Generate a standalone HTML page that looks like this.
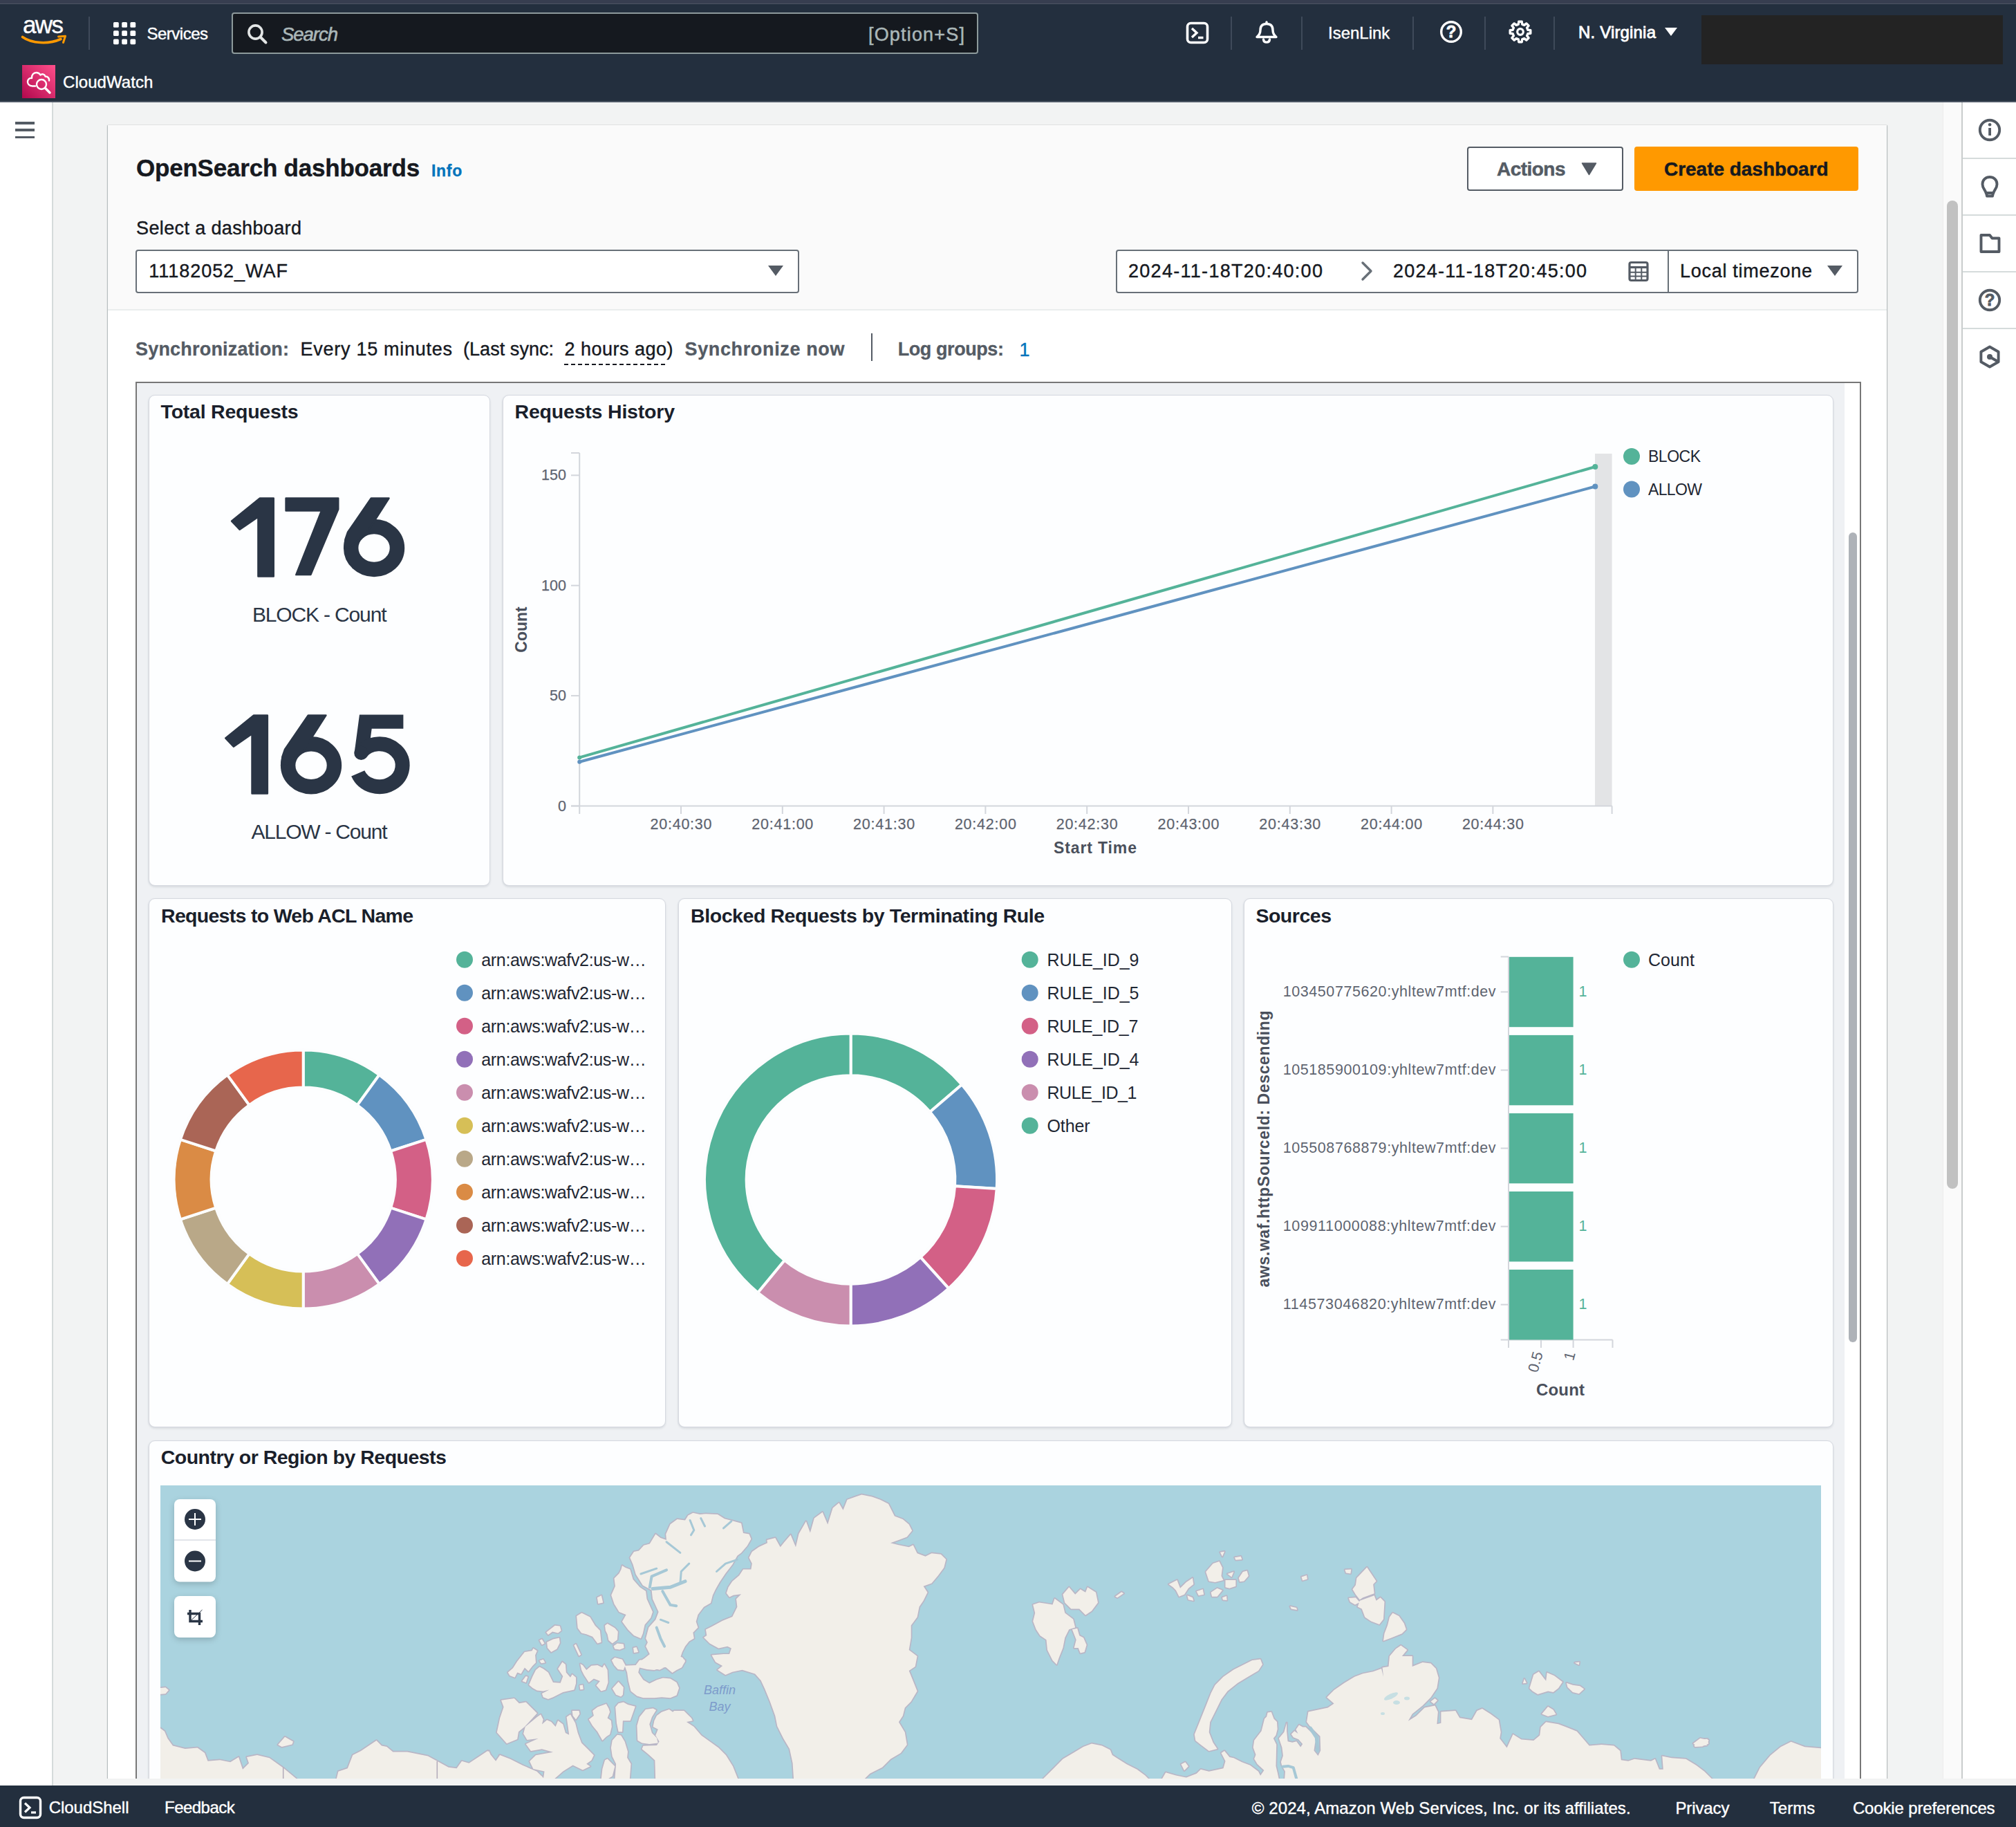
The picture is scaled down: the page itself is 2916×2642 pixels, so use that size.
<!DOCTYPE html>
<html><head><meta charset="utf-8"><title>CloudWatch</title>
<style>
html,body{margin:0;padding:0;}
body{width:2916px;height:2642px;overflow:hidden;background:#f2f3f3;position:relative;font-family:"Liberation Sans",sans-serif;}
#bx div{position:absolute;box-sizing:border-box;}
#gfx{position:absolute;left:0;top:0;}
.t{position:absolute;white-space:pre;line-height:1;}
</style></head><body>
<div id="bx">
<div style="left:0px;top:0px;width:2916px;height:148px;background:#232f3e;border-bottom:2px solid #4b5563;"></div>
<div style="left:0px;top:0px;width:2916px;height:6px;background:#373e50;border-bottom:1px solid #4d5463;"></div>
<div style="left:128px;top:24px;width:2px;height:48px;background:#3f4a5a;"></div>
<div style="left:335px;top:18px;width:1080px;height:60px;background:#15191f;border:2px solid #8d9a9b;border-radius:4px;"></div>
<div style="left:1780px;top:24px;width:2px;height:48px;background:#3f4a5a;"></div>
<div style="left:1882px;top:24px;width:2px;height:48px;background:#3f4a5a;"></div>
<div style="left:2043px;top:24px;width:2px;height:48px;background:#3f4a5a;"></div>
<div style="left:2147px;top:24px;width:2px;height:48px;background:#3f4a5a;"></div>
<div style="left:2247px;top:24px;width:2px;height:48px;background:#3f4a5a;"></div>
<div style="left:2461px;top:22px;width:436px;height:71px;background:#232323;"></div>
<div style="left:0px;top:148px;width:77px;height:2434px;background:#fff;border-right:2px solid #d5dbdb;"></div>
<div style="left:22px;top:176.0px;width:28px;height:3.6px;background:#545b64;"></div>
<div style="left:22px;top:186.39999999999998px;width:28px;height:3.6px;background:#545b64;"></div>
<div style="left:22px;top:196.79999999999998px;width:28px;height:3.6px;background:#545b64;"></div>
<div style="left:2810px;top:148px;width:28px;height:2424px;background:#fafafa;border-left:1px solid #ececec;"></div>
<div style="left:2816px;top:290px;width:16px;height:1429px;background:#c1c1c1;border-radius:8px;"></div>
<div style="left:2837px;top:148px;width:79px;height:2434px;background:#fff;border-left:2px solid #c9cdcd;"></div>
<div style="left:2839px;top:228px;width:77px;height:2px;background:#d5dbdb;"></div>
<div style="left:2839px;top:310px;width:77px;height:2px;background:#d5dbdb;"></div>
<div style="left:2839px;top:392px;width:77px;height:2px;background:#d5dbdb;"></div>
<div style="left:2839px;top:474px;width:77px;height:2px;background:#d5dbdb;"></div>
<div style="left:156px;top:181px;width:2573px;height:2500px;background:#fff;box-shadow:0 1px 2px 0 rgba(0,28,36,.35),1px 0 1px rgba(0,28,36,.15),-1px 0 1px rgba(0,28,36,.15);"></div>
<div style="left:156px;top:181px;width:2573px;height:268px;background:#fafafa;border-bottom:2px solid #eaeded;"></div>
<div style="left:2122px;top:212px;width:226px;height:64px;background:#fff;border:2px solid #545b64;border-radius:4px;"></div>
<div style="left:2364px;top:212px;width:324px;height:64px;background:#ff9900;border-radius:4px;"></div>
<div style="left:196px;top:360.5px;width:959.5px;height:63px;background:#fff;border:2px solid #687078;border-radius:4px;"></div>
<div style="left:1614px;top:360.5px;width:800px;height:63px;background:#fff;border:2px solid #687078;border-radius:4px 0 0 4px;"></div>
<div style="left:2412px;top:360.5px;width:275.5px;height:63px;background:#fff;border:2px solid #687078;border-radius:0 4px 4px 0;"></div>
<div style="left:816px;top:525.5px;width:150px;height:2px;background:repeating-linear-gradient(90deg,#16191f 0 6px,transparent 6px 10px);"></div>
<div style="left:1260px;top:482px;width:2px;height:40px;background:#545b64;"></div>
<div style="left:196px;top:552px;width:2496px;height:2100px;background:#eff1f4;border:2px solid #777;"></div>
<div style="left:2668px;top:554px;width:22px;height:2100px;background:#fff;"></div>
<div style="left:2674px;top:770px;width:12px;height:1171px;background:#aeb2b8;border-radius:6px;"></div>
<div style="left:214.5px;top:570.5px;width:494.5px;height:710.5px;background:#fdfeff;border:1.5px solid #d6d9e0;border-radius:9px;box-shadow:0 2px 3px rgba(60,70,90,.12),-1px 0 2px rgba(60,70,90,.05);"></div>
<div style="left:727px;top:570.5px;width:1924.5px;height:710.5px;background:#fdfeff;border:1.5px solid #d6d9e0;border-radius:9px;box-shadow:0 2px 3px rgba(60,70,90,.12),-1px 0 2px rgba(60,70,90,.05);"></div>
<div style="left:214.5px;top:1299px;width:748.5px;height:765px;background:#fdfeff;border:1.5px solid #d6d9e0;border-radius:9px;box-shadow:0 2px 3px rgba(60,70,90,.12),-1px 0 2px rgba(60,70,90,.05);"></div>
<div style="left:981px;top:1299px;width:800.5px;height:765px;background:#fdfeff;border:1.5px solid #d6d9e0;border-radius:9px;box-shadow:0 2px 3px rgba(60,70,90,.12),-1px 0 2px rgba(60,70,90,.05);"></div>
<div style="left:1798.5px;top:1299px;width:853.0px;height:765px;background:#fdfeff;border:1.5px solid #d6d9e0;border-radius:9px;box-shadow:0 2px 3px rgba(60,70,90,.12),-1px 0 2px rgba(60,70,90,.05);"></div>
<div style="left:214.5px;top:2083px;width:2437.0px;height:617px;background:#fdfeff;border:1.5px solid #d6d9e0;border-radius:9px;box-shadow:0 2px 3px rgba(60,70,90,.12),-1px 0 2px rgba(60,70,90,.05);"></div>
<div style="left:77px;top:2572px;width:2839px;height:10px;background:#f2f3f3;"></div>
<div style="left:0px;top:2582px;width:2916px;height:60px;background:#232f3e;"></div>
</div>
<svg id="gfx" width="2916" height="2642" viewBox="0 0 2916 2642">
<path d="M32.5 53.5 C46 63 70 64.5 88 56.5" fill="none" stroke="#ff9900" stroke-width="3.6" stroke-linecap="round"/><path d="M84.5 53 L94.5 52.2 L91.5 61.5" fill="none" stroke="#ff9900" stroke-width="3" stroke-linejoin="round" stroke-linecap="round"/>
<rect x="164.0" y="32.0" width="7.8" height="7.8" rx="1.6" fill="#fff"/>
<rect x="176.2" y="32.0" width="7.8" height="7.8" rx="1.6" fill="#fff"/>
<rect x="188.4" y="32.0" width="7.8" height="7.8" rx="1.6" fill="#fff"/>
<rect x="164.0" y="44.2" width="7.8" height="7.8" rx="1.6" fill="#fff"/>
<rect x="176.2" y="44.2" width="7.8" height="7.8" rx="1.6" fill="#fff"/>
<rect x="188.4" y="44.2" width="7.8" height="7.8" rx="1.6" fill="#fff"/>
<rect x="164.0" y="56.4" width="7.8" height="7.8" rx="1.6" fill="#fff"/>
<rect x="176.2" y="56.4" width="7.8" height="7.8" rx="1.6" fill="#fff"/>
<rect x="188.4" y="56.4" width="7.8" height="7.8" rx="1.6" fill="#fff"/>
<circle cx="369.5" cy="46.5" r="9.6" fill="none" stroke="#e3e6e6" stroke-width="3.6"/><path d="M376.5 53.5 L384.5 61.5" stroke="#e3e6e6" stroke-width="4" stroke-linecap="round"/>
<defs><linearGradient id="cwg" x1="0" y1="1" x2="1" y2="0"><stop offset="0" stop-color="#b0084d"/><stop offset="1" stop-color="#ff4f8b"/></linearGradient></defs><rect x="32" y="94" width="48" height="48" fill="url(#cwg)"/>
<g fill="none" stroke="#fff" stroke-width="2.4" stroke-linecap="round" stroke-linejoin="round"><path d="M51 124.5 H47 C42 124.5 39.5 121 40 117.5 C40.5 114 43.5 112.5 46 113 C45.5 108.5 48.5 105 52.5 105 C55 105 57 106 58.5 108.5 C60.5 106.5 64.5 107 65.5 110.5 C69.5 110.5 71.5 113.5 71 116.5"/><circle cx="60" cy="122" r="7"/><path d="M65.3 127.3 L72 134" stroke-width="3.4"/></g>
<rect x="1717.5" y="33.5" width="29" height="28" rx="5" fill="none" stroke="#fff" stroke-width="3.6"/><path d="M1724 41 L1731 47.5 L1724 54" fill="none" stroke="#fff" stroke-width="3.4" stroke-linejoin="miter"/><path d="M1733 54.5 H1740.5" stroke="#fff" stroke-width="3.4"/>
<g fill="none" stroke="#fff" stroke-width="3.4" stroke-linejoin="round" stroke-linecap="round"><path d="M1818 53.5 C1823 49.5 1823 46 1823 43.5 C1823 37 1827 34.5 1832 34.5 C1837 34.5 1841 37 1841 43.5 C1841 46 1841 49.5 1846 53.5 Z"/><path d="M1827.5 57 C1828 62.5 1836 62.5 1836.5 57"/><path d="M1832 32 V34"/></g>
<circle cx="2099" cy="46" r="14.3" fill="none" stroke="#fff" stroke-width="3.4"/>
<path d="M2196.8 31.2 L2201.2 31.2 L2201.7 35.1 L2204.8 36.4 L2207.9 33.9 L2211.1 37.1 L2208.6 40.2 L2209.9 43.3 L2213.8 43.8 L2213.8 48.2 L2209.9 48.7 L2208.6 51.8 L2211.1 54.9 L2207.9 58.1 L2204.8 55.6 L2201.7 56.9 L2201.2 60.8 L2196.8 60.8 L2196.3 56.9 L2193.2 55.6 L2190.1 58.1 L2186.9 54.9 L2189.4 51.8 L2188.1 48.7 L2184.2 48.2 L2184.2 43.8 L2188.1 43.3 L2189.4 40.2 L2186.9 37.1 L2190.1 33.9 L2193.2 36.4 L2196.3 35.1Z" fill="none" stroke="#fff" stroke-width="3.4" stroke-linejoin="round"/><circle cx="2199" cy="46" r="4.3" fill="none" stroke="#fff" stroke-width="3.2"/>
<path d="M2408 40 H2426 L2417 52 Z" fill="#fff"/>
<circle cx="2878" cy="188" r="14.2" fill="none" stroke="#545b64" stroke-width="3.9"/><rect x="2876.2" y="185" width="3.8" height="11" fill="#545b64"/><circle cx="2878.1" cy="180.3" r="2.3" fill="#545b64"/>
<g fill="none" stroke="#545b64" stroke-width="3.9" stroke-linejoin="round"><path d="M2872.5 279 C2872 275 2867.5 272.5 2867.5 266.5 C2867.5 260 2872 256 2878 256 C2884 256 2888.5 260 2888.5 266.5 C2888.5 272.5 2884 275 2883.5 279 Z"/><path d="M2873 279 L2874 283.5 H2882 L2883 279"/></g>
<path d="M2865.5 340 H2878 L2881.5 344.5 H2891.5 V364 H2865.5 Z" fill="none" stroke="#545b64" stroke-width="3.9" stroke-linejoin="round"/>
<circle cx="2878" cy="434" r="14.2" fill="none" stroke="#545b64" stroke-width="3.9"/>
<path d="M2878.0 501.5 L2890.6 508.8 L2890.6 523.2 L2878.0 530.5 L2865.4 523.2 L2865.4 508.8Z" fill="none" stroke="#545b64" stroke-width="3.9" stroke-linejoin="round"/><circle cx="2878" cy="516" r="4" fill="#545b64"/><path d="M2878 516 L2890 523" stroke="#545b64" stroke-width="3.9"/>
<path d="M2288.5 236 H2308.5 L2298.5 252.5 Z" fill="#545b64" stroke="#545b64" stroke-width="1.5" stroke-linejoin="round"/>
<path d="M1111 384 H1133 L1122 399 Z" fill="#545b64"/>
<path d="M1971 380 L1983 392 L1971 404" fill="none" stroke="#687078" stroke-width="3.4" stroke-linecap="round" stroke-linejoin="round"/>
<rect x="2357" y="379.5" width="26" height="26" rx="2.5" fill="none" stroke="#545b64" stroke-width="3.2"/><path d="M2357 386.5 H2383" stroke="#545b64" stroke-width="3.2"/><path d="M2365.7 388 V404 M2374.3 388 V404 M2358 393.8 H2382 M2358 399.6 H2382" stroke="#545b64" stroke-width="2"/>
<path d="M2643 384 H2665 L2654 399 Z" fill="#545b64"/>
<g transform="translate(210,680) scale(0.30656)"><path d="M606 132 V501 H533 V220 L446 280 L408 240 L541 132Z" fill="#2a3545" stroke="#2a3545" stroke-width="8" stroke-linejoin="round"/><path d="M664 132 H911 V184 L781 493 H712 L832 191 H664Z" fill="#2a3545" stroke="#2a3545" stroke-width="8" stroke-linejoin="round"/><ellipse cx="1080" cy="367" rx="109" ry="101" fill="none" stroke="#2a3545" stroke-width="70"/><path d="M1066 132 H1150 L1040 304 L960 367 L940 367 L944 327 L956 292Z" fill="#2a3545" stroke="#2a3545" stroke-width="8" stroke-linejoin="round"/><path d="M577 1156 V1525 H504 V1244 L417 1304 L379 1264 L512 1156Z" fill="#2a3545" stroke="#2a3545" stroke-width="8" stroke-linejoin="round"/><ellipse cx="783" cy="1392" rx="109" ry="101" fill="none" stroke="#2a3545" stroke-width="70"/><path d="M769 1156 H853 L743 1328 L663 1392 L643 1392 L647 1352 L659 1317Z" fill="#2a3545" stroke="#2a3545" stroke-width="8" stroke-linejoin="round"/><path d="M1218 1186 H1040 L1020 1336" fill="none" stroke="#2a3545" stroke-width="66" stroke-linejoin="miter"/><path d="M1016.8 1332.6 A109 101 0 1 1 1003.9 1429.8" fill="none" stroke="#2a3545" stroke-width="68"/><circle cx="1019" cy="1334" r="33" fill="#2a3545"/></g>
<rect x="2307" y="656" width="24.6" height="510" fill="#e3e4e6"/>
<path d="M838.2 655 V1177 M826 655 H838.2 M826 1165.5 H2331.6 M2331.6 1165.5 V1177" fill="none" stroke="#d3d6dc" stroke-width="2"/>
<path d="M826 1165.5 H838.2" stroke="#d3d6dc" stroke-width="2"/>
<path d="M826 1006.1 H838.2" stroke="#d3d6dc" stroke-width="2"/>
<path d="M826 846.7 H838.2" stroke="#d3d6dc" stroke-width="2"/>
<path d="M826 687.3 H838.2" stroke="#d3d6dc" stroke-width="2"/>
<path d="M985.0 1165.5 V1177" stroke="#d3d6dc" stroke-width="2"/>
<path d="M1131.8 1165.5 V1177" stroke="#d3d6dc" stroke-width="2"/>
<path d="M1278.6 1165.5 V1177" stroke="#d3d6dc" stroke-width="2"/>
<path d="M1425.4 1165.5 V1177" stroke="#d3d6dc" stroke-width="2"/>
<path d="M1572.2 1165.5 V1177" stroke="#d3d6dc" stroke-width="2"/>
<path d="M1719.0 1165.5 V1177" stroke="#d3d6dc" stroke-width="2"/>
<path d="M1865.8 1165.5 V1177" stroke="#d3d6dc" stroke-width="2"/>
<path d="M2012.6 1165.5 V1177" stroke="#d3d6dc" stroke-width="2"/>
<path d="M2159.4 1165.5 V1177" stroke="#d3d6dc" stroke-width="2"/>
<path d="M838.2 1095.4 L2307.3 675" stroke="#54b399" stroke-width="4" fill="none"/><circle cx="2307.3" cy="675" r="4" fill="#54b399"/><circle cx="838.2" cy="1095.4" r="3" fill="#54b399"/>
<path d="M838.2 1101.7 L2307.3 703.5" stroke="#6092c0" stroke-width="4" fill="none"/><circle cx="2307.3" cy="703.5" r="4" fill="#6092c0"/><circle cx="838.2" cy="1101.7" r="3" fill="#6092c0"/>
<circle cx="2360" cy="660" r="12" fill="#54b399"/><circle cx="2360" cy="707.5" r="12" fill="#6092c0"/>
<path d="M438.7 1518.6 A187 187 0 0 1 548.6 1554.3 L516.9 1598.0 A133 133 0 0 0 438.7 1572.6Z" fill="#54b399" stroke="#fcfdfe" stroke-width="4"/><path d="M548.6 1554.3 A187 187 0 0 1 616.5 1647.8 L565.2 1664.5 A133 133 0 0 0 516.9 1598.0Z" fill="#6092c0" stroke="#fcfdfe" stroke-width="4"/><path d="M616.5 1647.8 A187 187 0 0 1 616.5 1763.4 L565.2 1746.7 A133 133 0 0 0 565.2 1664.5Z" fill="#d36086" stroke="#fcfdfe" stroke-width="4"/><path d="M616.5 1763.4 A187 187 0 0 1 548.6 1856.9 L516.9 1813.2 A133 133 0 0 0 565.2 1746.7Z" fill="#9170b8" stroke="#fcfdfe" stroke-width="4"/><path d="M548.6 1856.9 A187 187 0 0 1 438.7 1892.6 L438.7 1838.6 A133 133 0 0 0 516.9 1813.2Z" fill="#ca8eae" stroke="#fcfdfe" stroke-width="4"/><path d="M438.7 1892.6 A187 187 0 0 1 328.8 1856.9 L360.5 1813.2 A133 133 0 0 0 438.7 1838.6Z" fill="#d6bf57" stroke="#fcfdfe" stroke-width="4"/><path d="M328.8 1856.9 A187 187 0 0 1 260.9 1763.4 L312.2 1746.7 A133 133 0 0 0 360.5 1813.2Z" fill="#b9a888" stroke="#fcfdfe" stroke-width="4"/><path d="M260.9 1763.4 A187 187 0 0 1 260.9 1647.8 L312.2 1664.5 A133 133 0 0 0 312.2 1746.7Z" fill="#da8b45" stroke="#fcfdfe" stroke-width="4"/><path d="M260.9 1647.8 A187 187 0 0 1 328.8 1554.3 L360.5 1598.0 A133 133 0 0 0 312.2 1664.5Z" fill="#aa6556" stroke="#fcfdfe" stroke-width="4"/><path d="M328.8 1554.3 A187 187 0 0 1 438.7 1518.6 L438.7 1572.6 A133 133 0 0 0 360.5 1598.0Z" fill="#e7664c" stroke="#fcfdfe" stroke-width="4"/>
<circle cx="672" cy="1387.7" r="12" fill="#54b399"/>
<circle cx="672" cy="1435.7" r="12" fill="#6092c0"/>
<circle cx="672" cy="1483.7" r="12" fill="#d36086"/>
<circle cx="672" cy="1531.7" r="12" fill="#9170b8"/>
<circle cx="672" cy="1579.7" r="12" fill="#ca8eae"/>
<circle cx="672" cy="1627.7" r="12" fill="#d6bf57"/>
<circle cx="672" cy="1675.7" r="12" fill="#b9a888"/>
<circle cx="672" cy="1723.7" r="12" fill="#da8b45"/>
<circle cx="672" cy="1771.7" r="12" fill="#aa6556"/>
<circle cx="672" cy="1819.7" r="12" fill="#e7664c"/>
<path d="M1230.6 1494.5 A211.5 211.5 0 0 1 1391.2 1568.4 L1345.1 1607.9 A150.8 150.8 0 0 0 1230.6 1555.2Z" fill="#54b399" stroke="#fcfdfe" stroke-width="4"/><path d="M1391.2 1568.4 A211.5 211.5 0 0 1 1441.7 1718.9 L1381.1 1715.2 A150.8 150.8 0 0 0 1345.1 1607.9Z" fill="#6092c0" stroke="#fcfdfe" stroke-width="4"/><path d="M1441.7 1718.9 A211.5 211.5 0 0 1 1372.1 1863.2 L1331.5 1818.1 A150.8 150.8 0 0 0 1381.1 1715.2Z" fill="#d36086" stroke="#fcfdfe" stroke-width="4"/><path d="M1372.1 1863.2 A211.5 211.5 0 0 1 1230.6 1917.5 L1230.6 1856.8 A150.8 150.8 0 0 0 1331.5 1818.1Z" fill="#9170b8" stroke="#fcfdfe" stroke-width="4"/><path d="M1230.6 1917.5 A211.5 211.5 0 0 1 1096.1 1869.2 L1134.7 1822.4 A150.8 150.8 0 0 0 1230.6 1856.8Z" fill="#ca8eae" stroke="#fcfdfe" stroke-width="4"/><path d="M1096.1 1869.2 A211.5 211.5 0 0 1 1230.6 1494.5 L1230.6 1555.2 A150.8 150.8 0 0 0 1134.7 1822.4Z" fill="#54b399" stroke="#fcfdfe" stroke-width="4"/>
<circle cx="1489.7" cy="1387.7" r="12" fill="#54b399"/>
<circle cx="1489.7" cy="1435.7" r="12" fill="#6092c0"/>
<circle cx="1489.7" cy="1483.7" r="12" fill="#d36086"/>
<circle cx="1489.7" cy="1531.7" r="12" fill="#9170b8"/>
<circle cx="1489.7" cy="1579.7" r="12" fill="#ca8eae"/>
<circle cx="1489.7" cy="1627.7" r="12" fill="#54b399"/>
<path d="M2182 1383.5 V1949 M2170.7 1383.5 H2182 M2170.7 1937.5 H2332.5 M2229 1937.5 V1949 M2275.6 1937.5 V1949 M2332.5 1937.5 V1949" fill="none" stroke="#d3d6dc" stroke-width="2"/>
<rect x="2183" y="1383.8" width="92.6" height="101.4" fill="#54b399"/><path d="M2170.7 1434.4 H2182" stroke="#d3d6dc" stroke-width="2"/>
<rect x="2183" y="1496.9" width="92.6" height="101.4" fill="#54b399"/><path d="M2170.7 1547.5 H2182" stroke="#d3d6dc" stroke-width="2"/>
<rect x="2183" y="1609.9" width="92.6" height="101.4" fill="#54b399"/><path d="M2170.7 1660.5 H2182" stroke="#d3d6dc" stroke-width="2"/>
<rect x="2183" y="1723.0" width="92.6" height="101.4" fill="#54b399"/><path d="M2170.7 1773.6 H2182" stroke="#d3d6dc" stroke-width="2"/>
<rect x="2183" y="1836.0" width="92.6" height="101.4" fill="#54b399"/><path d="M2170.7 1886.6 H2182" stroke="#d3d6dc" stroke-width="2"/>
<circle cx="2360" cy="1387.7" r="12" fill="#54b399"/>
<defs><filter id="mapblur" x="-2%" y="-5%" width="104%" height="110%"><feGaussianBlur stdDeviation="0.7"/></filter><clipPath id="mapclip"><rect x="232" y="2148" width="2402" height="424"/></clipPath></defs><rect x="232" y="2148" width="2402" height="424" fill="#aad3df"/><g clip-path="url(#mapclip)"><g filter="url(#mapblur)"><path d="M232.0 2499.2 L238.0 2503.7 L242.4 2514.1 L249.9 2524.5 L267.7 2529.0 L285.6 2527.5 L296.0 2534.9 L300.5 2546.8 L318.3 2545.3 L333.2 2548.3 L345.1 2540.9 L351.0 2558.7 L360.0 2549.8 L357.0 2540.9 L371.9 2537.9 L389.7 2542.3 L410.6 2557.2 L428.4 2572.1 L230.5 2573.6Z M230.5 2441.2 L239.4 2440.3 L243.9 2444.1 L239.4 2449.2 L230.5 2450.1Z M402.2 2523.0 L412.1 2511.7 L424.0 2518.5 L422.5 2522.4 L407.6 2526.0Z M486.5 2573.6 L489.4 2561.7 L502.8 2557.2 L510.3 2537.9 L522.2 2531.9 L544.5 2517.0 L551.9 2524.5 L559.4 2526.0 L568.3 2533.4 L589.1 2533.4 L618.9 2539.4 L632.3 2546.8 L648.7 2555.7 L660.6 2557.2 L668.0 2546.8 L678.4 2549.8 L696.3 2537.9 L705.2 2531.9 L717.1 2546.8 L723.1 2537.9 L738.0 2543.8 L755.8 2552.8 L776.6 2561.7 L788.5 2573.6Z M1109.4 2226.9 L1121.3 2223.9 L1128.7 2237.3 L1134.7 2229.8 L1143.6 2219.4 L1151.0 2237.3 L1155.5 2217.9 L1165.9 2200.1 L1171.9 2216.5 L1177.8 2195.6 L1189.7 2186.7 L1197.2 2204.5 L1204.6 2180.7 L1213.5 2173.3 L1219.5 2183.7 L1225.5 2168.8 L1237.4 2164.4 L1246.3 2161.4 L1261.2 2164.4 L1273.1 2168.8 L1285.0 2174.8 L1288.0 2180.7 L1293.9 2192.6 L1305.8 2197.1 L1314.7 2204.5 L1319.2 2213.5 L1311.8 2222.4 L1299.9 2226.9 L1288.0 2231.3 L1299.9 2234.3 L1314.7 2237.3 L1320.7 2234.3 L1326.6 2246.2 L1338.5 2250.7 L1347.5 2246.2 L1360.9 2247.7 L1368.3 2255.1 L1365.3 2267.0 L1356.4 2279.0 L1347.5 2289.4 L1335.6 2293.8 L1341.5 2302.8 L1335.6 2314.7 L1329.6 2323.6 L1326.6 2338.5 L1317.7 2350.4 L1317.7 2368.2 L1314.7 2386.1 L1326.6 2395.0 L1323.7 2409.9 L1314.7 2415.9 L1320.7 2430.7 L1326.6 2445.6 L1317.7 2460.5 L1308.8 2469.4 L1305.8 2481.3 L1299.9 2490.3 L1308.8 2505.1 L1311.8 2523.0 L1302.8 2534.9 L1288.0 2543.8 L1276.0 2555.7 L1258.2 2564.7 L1249.3 2573.6 L1148.1 2573.6 L1146.6 2549.8 L1142.1 2529.0 L1133.2 2514.1 L1124.3 2496.2 L1121.3 2481.3 L1113.8 2460.5 L1106.4 2442.6 L1100.6 2430.1 L1092.1 2420.5 L1073.6 2414.8 L1059.3 2417.7 L1049.4 2422.0 L1038.0 2414.8 L1045.1 2409.1 L1035.1 2403.5 L1029.4 2393.5 L1046.5 2392.1 L1055.1 2392.1 L1057.9 2383.5 L1052.2 2380.7 L1039.4 2383.5 L1026.6 2376.4 L1018.0 2367.9 L1022.3 2365.0 L1020.9 2356.5 L1029.4 2352.2 L1045.1 2343.7 L1059.3 2338.0 L1066.4 2323.7 L1065.0 2312.3 L1072.1 2305.2 L1060.7 2306.7 L1055.1 2309.5 L1050.8 2303.8 L1053.6 2295.3 L1059.3 2286.7 L1069.3 2278.2 L1075.0 2269.6 L1086.4 2269.6 L1087.8 2261.1 L1083.5 2252.6 L1087.8 2244.0 L1097.8 2236.9 L1110.0 2231.2Z M911.3 2252.6 L917.0 2244.0 L924.1 2242.6 L931.2 2234.8 L939.8 2232.6 L948.3 2218.4 L955.4 2224.1 L964.0 2226.9 L963.2 2218.4 L969.6 2204.2 L979.6 2197.0 L991.0 2198.5 L995.3 2191.4 L1002.4 2187.8 L1012.3 2189.9 L1020.9 2189.2 L1038.0 2189.9 L1047.9 2196.3 L1059.3 2199.2 L1072.1 2202.7 L1075.0 2217.0 L1083.5 2218.4 L1086.4 2225.5 L1080.7 2235.5 L1072.1 2245.4 L1066.4 2249.7 L1059.3 2262.5 L1049.4 2275.3 L1040.8 2288.1 L1035.1 2298.1 L1030.9 2306.7 L1028.0 2318.0 L1018.0 2323.7 L1009.5 2335.1 L1006.7 2345.1 L1009.5 2353.6 L1002.4 2360.7 L1003.8 2369.3 L996.7 2373.6 L991.0 2380.7 L986.7 2389.2 L983.9 2397.8 L991.0 2400.6 L986.7 2410.6 L978.2 2414.8 L972.5 2419.1 L962.5 2410.6 L954.0 2414.8 L944.0 2412.0 L935.5 2413.4 L926.9 2409.1 L924.1 2403.5 L932.6 2397.8 L939.8 2392.1 L934.1 2380.7 L936.9 2375.0 L934.1 2369.3 L938.3 2353.6 L948.3 2342.2 L952.6 2330.9 L944.0 2312.3 L942.6 2299.5 L929.8 2292.4 L919.8 2276.8 L915.6 2262.5Z M899.9 2264.0 L904.2 2266.8 L911.3 2269.6 L915.6 2283.9 L925.5 2295.3 L934.1 2301.0 L935.5 2312.3 L944.0 2330.9 L941.2 2339.4 L932.6 2349.4 L929.8 2362.2 L926.9 2369.3 L917.0 2365.0 L908.4 2356.5 L899.9 2345.1 L905.6 2335.1 L895.6 2330.9 L888.5 2319.5 L884.2 2306.7 L889.9 2293.8 L888.5 2282.5 L895.6 2275.3 L898.5 2269.6Z M863.8 2310.2 L869.8 2307.2 L872.2 2317.6 L865.3 2319.1Z M734.8 2418.6 L742.0 2412.3 L748.2 2402.5 L758.9 2389.1 L769.6 2387.3 L771.4 2383.8 L776.8 2387.3 L774.1 2393.6 L775.0 2404.3 L770.5 2408.8 L764.3 2416.8 L758.9 2411.4 L753.6 2420.4 L748.2 2418.6 L744.6 2425.7 L737.5 2423.0Z M765.2 2436.4 L770.5 2423.9 L775.0 2415.0 L780.4 2410.5 L785.7 2413.2 L792.9 2418.6 L800.0 2432.9 L810.7 2433.8 L814.3 2423.9 L807.1 2413.2 L813.4 2403.4 L817.9 2407.0 L818.8 2418.6 L825.0 2425.7 L827.7 2421.2 L833.0 2425.7 L833.0 2434.6 L830.4 2443.6 L814.3 2447.1 L800.0 2454.3 L792.9 2457.0 L785.7 2454.3 L783.9 2448.9 L794.6 2443.6 L785.7 2445.4 L776.8 2444.5 L770.5 2440.9Z M755.4 2431.1 L760.7 2423.9 L763.4 2424.8 L760.7 2432.9Z M780.4 2401.6 L785.7 2399.8 L788.4 2404.3 L783.0 2405.2Z M838.4 2437.3 L842.9 2436.4 L843.8 2442.7 L839.3 2443.2Z M790.2 2360.5 L802.7 2350.7 L809.8 2351.6 L811.6 2357.9 L807.1 2361.4 L799.1 2359.6 L792.9 2364.1Z M791.1 2374.8 L800.0 2370.4 L808.9 2368.6 L809.8 2375.7 L805.4 2384.6 L797.3 2389.1 L792.0 2382.9Z M780.4 2372.1 L783.9 2370.4 L787.5 2376.6 L783.9 2378.4Z M830.4 2379.3 L833.0 2377.5 L840.2 2392.7 L837.5 2394.5Z M834.1 2337.0 L841.4 2332.5 L853.4 2338.6 L860.7 2350.7 L867.9 2357.9 L869.6 2374.8 L864.3 2376.6 L857.1 2366.8 L848.2 2363.2 L841.1 2361.4 L835.7 2354.3Z M875.0 2350.7 L878.6 2348.0 L889.3 2354.3 L893.8 2359.6 L892.9 2371.2 L885.7 2376.6 L880.4 2372.1 L878.6 2363.2 L875.9 2357.9Z M887.5 2380.2 L892.9 2376.6 L901.8 2377.5 L902.7 2382.9 L896.4 2385.5 L889.3 2384.6Z M916.1 2382.9 L920.5 2382.0 L923.2 2389.1 L917.0 2390.0Z M839.3 2406.1 L842.9 2407.9 L848.2 2415.0 L855.4 2408.8 L864.3 2407.9 L871.4 2411.4 L874.1 2407.0 L878.6 2415.0 L879.5 2432.9 L875.9 2443.6 L869.6 2445.4 L862.5 2437.3 L867.9 2431.1 L858.9 2427.5 L851.8 2432.9 L844.6 2422.1 L841.1 2415.0Z M884.8 2400.7 L889.3 2397.1 L900.0 2399.8 L904.5 2407.9 L901.8 2415.0 L893.8 2414.1 L888.4 2407.9Z M885.7 2441.8 L894.6 2432.0 L901.8 2440.0 L900.9 2450.7 L898.2 2453.4 L891.1 2450.7Z M903.6 2408.8 L919.6 2407.9 L925.0 2400.7 L937.5 2398.9 L944.6 2391.8 L950.0 2395.4 L962.5 2398.9 L978.6 2393.6 L987.5 2397.1 L991.1 2402.5 L985.7 2411.4 L978.6 2415.0 L973.2 2418.6 L967.9 2410.5 L957.1 2411.4 L946.4 2415.0 L935.7 2414.1 L925.0 2411.4 L923.2 2418.6 L930.4 2429.3 L939.3 2434.6 L950.0 2429.3 L958.9 2426.6 L969.6 2427.5 L978.6 2432.9 L982.1 2440.9 L978.6 2451.6 L969.6 2455.2 L957.1 2454.3 L946.4 2455.2 L930.4 2455.2 L921.4 2452.5 L912.5 2445.4 L908.9 2431.1 L907.1 2418.6Z M725.0 2458.8 L743.8 2456.1 L750.9 2463.2 L760.7 2461.4 L776.8 2477.5 L758.9 2497.1 L750.0 2504.3 L748.2 2515.0 L733.0 2521.2 L718.8 2505.2 L723.2 2484.6 L728.6 2468.6Z M757.1 2507.0 L759.8 2497.1 L776.8 2482.9 L782.1 2479.3 L785.7 2486.4 L783.9 2493.6 L791.1 2487.3 L797.3 2490.0 L803.6 2497.1 L807.1 2488.2 L814.3 2493.6 L817.9 2506.1 L823.2 2508.8 L819.6 2482.9 L825.0 2479.3 L832.1 2491.8 L835.7 2506.1 L841.1 2520.4 L850.0 2529.3 L858.9 2538.2 L855.4 2545.4 L848.2 2550.7 L853.6 2554.3 L842.9 2559.6 L828.6 2552.5 L814.3 2561.4 L800.0 2573.9 L785.7 2573.9 L787.5 2561.4 L771.4 2557.9 L766.1 2547.1 L775.0 2538.2 L800.0 2533.8 L783.9 2529.3 L767.9 2532.0 L760.7 2522.1 L778.6 2514.1 L762.5 2515.9Z M698.2 2541.8 L707.1 2532.0 L714.3 2548.0 L723.2 2545.4 L722.3 2538.2 L726.8 2550.7 L753.6 2552.5 L771.4 2559.6 L783.9 2568.6 L778.6 2573.9 L698.2 2573.9Z M851.8 2486.4 L858.9 2481.1 L857.1 2473.9 L864.3 2468.6 L876.8 2464.1 L880.4 2470.4 L882.1 2475.7 L878.6 2484.6 L883.9 2488.2 L884.8 2497.1 L882.1 2507.9 L876.8 2511.4 L871.4 2516.8 L864.3 2504.3 L857.1 2495.4Z M827.7 2473.9 L837.5 2473.9 L838.4 2478.4 L833.0 2486.4 L828.6 2481.1Z M890.2 2468.6 L894.6 2463.2 L901.8 2461.4 L908.0 2465.0 L918.8 2467.7 L911.6 2488.2 L900.9 2488.2 L900.0 2504.3 L894.6 2504.3 L892.0 2491.8Z M885.7 2516.8 L892.9 2508.8 L898.2 2509.6 L903.6 2518.6 L908.0 2532.9 L907.1 2541.8 L912.5 2550.7 L910.7 2573.9 L889.3 2573.9 L891.1 2550.7 L885.7 2540.0 L883.9 2527.5Z M875.0 2545.4 L878.6 2543.6 L889.3 2554.3 L885.7 2568.6 L876.8 2573.9 L869.6 2573.9 L871.4 2557.9Z M922.3 2516.8 L921.4 2495.4 L925.0 2482.9 L933.9 2472.1 L944.6 2470.4 L949.1 2473.0 L942.9 2482.9 L939.3 2493.6 L942.9 2506.1 L950.0 2513.2 L951.8 2520.4 L939.3 2522.1 L928.6 2520.4Z M950.0 2481.1 L957.1 2475.7 L967.9 2472.1 L973.2 2475.7 L975.0 2473.9 L989.3 2473.9 L1000.0 2484.6 L1001.8 2488.2 L992.9 2490.0 L1003.6 2497.1 L1014.3 2509.6 L1026.8 2518.6 L1039.3 2527.5 L1050.0 2538.2 L1060.0 2554.3 L1067.9 2573.9 L948.2 2573.9 L947.3 2545.4 L937.5 2536.4 L928.6 2529.3 L930.4 2524.8 L950.0 2523.9 L953.6 2518.6 L948.2 2509.6 L951.8 2500.7 L944.6 2497.1 L946.4 2488.2Z M1494.2 2320.6 L1503.1 2317.6 L1513.5 2319.1 L1522.5 2320.6 L1525.5 2311.7 L1537.4 2320.6 L1540.3 2332.5 L1552.2 2341.5 L1555.2 2353.4 L1546.3 2356.3 L1540.3 2368.2 L1537.4 2383.1 L1531.4 2398.0 L1528.4 2406.9 L1522.5 2401.0 L1515.0 2386.1 L1513.5 2371.2 L1504.6 2365.3 L1498.7 2356.3 L1494.2 2344.4 L1497.2 2332.5Z M1537.4 2305.7 L1546.3 2295.3 L1555.2 2305.7 L1562.7 2298.3 L1570.1 2302.8 L1573.1 2295.3 L1585.0 2302.8 L1588.0 2317.6 L1579.0 2329.5 L1570.1 2335.5 L1561.2 2326.6 L1549.3 2326.6 L1540.3 2317.6Z M1550.8 2356.3 L1558.2 2354.8 L1561.2 2365.3 L1567.1 2368.2 L1571.6 2378.7 L1568.6 2389.1 L1562.7 2390.6 L1559.7 2383.1 L1553.7 2383.1 L1556.7 2371.2Z M1613.2 2308.7 L1622.2 2302.2 L1625.2 2304.2 L1616.2 2310.2Z M1690.6 2290.9 L1702.5 2284.9 L1707.0 2296.8 L1715.9 2287.9 L1724.9 2281.9 L1726.3 2290.9 L1718.9 2296.8 L1713.0 2305.7 L1705.5 2308.7 L1701.0 2299.8 L1696.6 2295.3Z M1744.2 2273.0 L1754.6 2261.1 L1763.5 2258.1 L1768.0 2267.0 L1766.5 2279.0 L1769.5 2284.9 L1757.6 2287.9 L1748.7 2286.4Z M1772.5 2284.9 L1787.4 2284.9 L1787.4 2293.8 L1778.4 2296.8 L1772.5 2295.3Z M1791.8 2281.9 L1797.8 2273.0 L1803.7 2271.5 L1805.8 2279.0 L1799.3 2286.4 L1793.3 2287.3Z M1730.8 2301.3 L1739.7 2298.3 L1741.2 2305.7 L1733.8 2307.2Z M1751.6 2302.8 L1760.6 2296.8 L1768.0 2299.8 L1760.6 2308.7 L1753.1 2308.7Z M1765.0 2244.7 L1771.0 2243.8 L1768.0 2250.7Z M1785.9 2252.2 L1794.8 2250.7 L1796.3 2255.1 L1787.4 2255.7Z M1717.4 2307.2 L1724.9 2310.2 L1726.3 2314.7 L1718.9 2313.2Z M1882.6 2280.4 L1890.0 2278.1 L1890.9 2283.4 L1884.1 2285.5Z M1866.2 2323.0 L1875.2 2325.1 L1876.0 2328.1 L1867.7 2326.6Z M1768.0 2310.2 L1774.0 2308.1 L1774.6 2314.1 L1768.9 2313.5Z M1775.5 2276.0 L1784.4 2273.0 L1781.4 2280.4Z M1727.8 2508.1 L1733.8 2493.2 L1739.7 2478.4 L1745.7 2463.5 L1751.6 2448.6 L1757.6 2436.7 L1769.5 2424.8 L1784.4 2414.4 L1799.3 2406.9 L1811.2 2401.0 L1823.1 2399.5 L1826.0 2406.9 L1820.1 2415.9 L1805.2 2424.8 L1790.3 2433.7 L1775.5 2445.6 L1766.5 2457.5 L1757.6 2475.4 L1750.2 2490.3 L1748.7 2505.1 L1754.6 2520.0 L1760.6 2529.0 L1748.7 2531.9 L1736.8 2523.0 L1729.3 2517.0Z M1507.6 2573.6 L1522.5 2558.7 L1537.4 2543.8 L1552.2 2534.9 L1567.1 2526.0 L1579.0 2521.5 L1593.9 2524.5 L1605.8 2530.4 L1608.8 2537.9 L1617.7 2543.8 L1629.6 2551.3 L1644.5 2558.7 L1656.4 2567.6 L1662.4 2573.6Z M1680.2 2573.6 L1686.2 2563.2 L1701.0 2567.6 L1715.9 2570.6 L1730.8 2564.7 L1736.8 2558.7 L1748.7 2561.7 L1769.5 2557.2 L1772.5 2546.8 L1766.5 2534.9 L1771.0 2531.9 L1778.4 2540.9 L1784.4 2542.3 L1796.3 2548.3 L1808.2 2552.8 L1820.1 2561.7 L1826.0 2573.6Z M1820.2 2573.3 L1822.4 2568.8 L1828.4 2559.9 L1818.7 2551.0 L1814.2 2543.5 L1816.5 2537.6 L1812.7 2527.1 L1814.2 2516.7 L1824.6 2503.3 L1829.1 2485.5 L1832.1 2482.5 L1833.6 2476.5 L1838.8 2475.8 L1842.5 2485.5 L1847.0 2489.9 L1847.7 2500.4 L1845.5 2509.3 L1841.8 2513.8 L1846.2 2522.7 L1845.5 2553.9 L1847.7 2562.9 L1849.9 2573.3Z M1708.5 2551.3 L1714.4 2548.3 L1718.9 2554.2 L1713.0 2560.2Z M1962.4 2281.9 L1977.2 2266.5 L1990.6 2286.4 L1986.2 2290.9 L1987.7 2304.2 L1971.3 2310.2 L1966.8 2313.2 L1960.9 2305.7 L1956.4 2298.3 L1960.9 2292.3Z M1966.8 2314.7 L1987.7 2307.2 L1990.6 2314.7 L1996.6 2310.2 L2002.5 2316.2 L2001.0 2341.5 L1995.1 2348.9 L1983.2 2344.4 L1974.3 2338.5 L1969.8 2326.6 L1963.8 2323.6Z M1951.0 2311.1 L1960.9 2310.2 L1966.8 2317.0 L1960.0 2320.6 L1952.8 2316.2Z M2010.0 2338.5 L2014.4 2332.5 L2023.4 2337.0 L2030.8 2347.4 L2033.8 2356.3 L2027.8 2362.3 L2013.0 2368.2 L2001.0 2372.7 L2002.5 2362.3 L2007.0 2350.4Z M1945.4 2270.0 L1954.3 2269.4 L1953.4 2275.4 L1946.9 2274.5Z M1858.1 2573.3 L1858.9 2561.4 L1854.4 2553.9 L1852.9 2548.0 L1855.9 2539.0 L1854.4 2527.1 L1849.9 2513.8 L1857.4 2504.8 L1861.1 2491.4 L1861.1 2503.3 L1862.6 2518.2 L1869.3 2519.7 L1875.2 2518.2 L1881.2 2526.4 L1884.2 2521.9 L1878.2 2515.2 L1870.8 2512.3 L1867.8 2507.8 L1872.3 2503.3 L1877.5 2507.1 L1874.5 2501.1 L1879.0 2494.4 L1884.2 2497.4 L1888.6 2497.4 L1896.1 2504.8 L1905.0 2512.3 L1902.0 2521.2 L1900.5 2531.6 L1906.5 2539.0 L1910.2 2531.6 L1909.5 2510.8 L1902.0 2503.3 L1894.6 2495.9 L1890.1 2489.9 L1892.4 2475.4 L1920.7 2469.4 L1929.6 2463.5 L1919.2 2454.5 L1929.6 2444.1 L1944.5 2433.7 L1959.4 2424.8 L1971.3 2420.3 L1986.2 2417.3 L1998.1 2412.9 L2001.0 2424.8 L1999.6 2411.4 L2008.5 2409.9 L2010.0 2395.0 L2018.9 2384.6 L2026.3 2379.5 L2035.3 2386.1 L2027.8 2395.0 L2042.7 2395.0 L2042.7 2409.9 L2057.6 2404.0 L2069.5 2405.4 L2076.9 2412.9 L2080.8 2426.3 L2078.4 2441.2 L2069.5 2454.5 L2057.6 2466.5 L2042.7 2478.4 L2036.8 2488.8 L2048.7 2481.3 L2060.6 2469.4 L2075.5 2466.5 L2079.9 2475.4 L2078.4 2493.2 L2084.4 2491.8 L2084.4 2475.4 L2105.2 2473.9 L2111.2 2484.3 L2129.0 2487.3 L2136.5 2473.9 L2143.9 2470.9 L2155.8 2478.4 L2167.7 2487.3 L2170.7 2505.1 L2169.2 2514.1 L2179.6 2527.5 L2188.5 2508.1 L2200.5 2515.6 L2218.3 2517.0 L2227.2 2509.6 L2228.7 2497.7 L2236.2 2490.3 L2254.0 2493.2 L2265.9 2497.7 L2280.8 2503.7 L2289.7 2514.1 L2298.7 2524.5 L2316.5 2523.0 L2334.4 2524.5 L2343.3 2531.9 L2344.8 2545.3 L2355.2 2546.8 L2364.1 2543.8 L2388.0 2546.8 L2393.9 2543.8 L2399.9 2558.7 L2405.8 2558.7 L2404.3 2539.4 L2417.7 2542.3 L2438.5 2543.8 L2453.4 2552.8 L2465.3 2561.7 L2477.2 2573.6Z M2212.4 2441.2 L2218.3 2421.8 L2225.8 2417.3 L2236.2 2430.7 L2237.7 2418.8 L2248.1 2423.3 L2260.0 2432.2 L2254.0 2441.2 L2246.6 2447.1 L2239.1 2445.6 L2224.3 2450.1 L2216.8 2445.6Z M2265.9 2433.7 L2274.9 2436.7 L2285.3 2438.2 L2291.2 2442.6 L2283.8 2449.2 L2274.9 2447.1 L2267.4 2439.7Z M2230.2 2478.4 L2239.1 2467.9 L2246.6 2472.4 L2250.5 2479.0 L2239.1 2481.9Z M2204.9 2427.8 L2207.9 2433.7 L2202.8 2434.3Z M2277.8 2404.5 L2284.4 2403.4 L2283.8 2407.5Z M2450.5 2524.5 L2457.9 2515.6 L2469.8 2514.7 L2471.3 2521.5 L2462.4 2525.4 L2451.9 2526.0Z M2069.5 2460.5 L2075.5 2456.0 L2079.0 2459.0 L2074.0 2464.1Z M2536.0 2575.8 L2546.0 2556.0 L2560.8 2538.6 L2575.7 2526.2 L2590.6 2518.8 L2610.4 2526.2 L2640.2 2528.7 L2640.2 2575.8Z M2449.2 2521.2 L2459.2 2513.8 L2471.6 2516.3 L2469.1 2523.7 L2454.2 2525.2Z" fill="none" stroke="#b9b6c6" stroke-width="3.4" stroke-linejoin="round"/><path d="M232.0 2499.2 L238.0 2503.7 L242.4 2514.1 L249.9 2524.5 L267.7 2529.0 L285.6 2527.5 L296.0 2534.9 L300.5 2546.8 L318.3 2545.3 L333.2 2548.3 L345.1 2540.9 L351.0 2558.7 L360.0 2549.8 L357.0 2540.9 L371.9 2537.9 L389.7 2542.3 L410.6 2557.2 L428.4 2572.1 L230.5 2573.6Z M230.5 2441.2 L239.4 2440.3 L243.9 2444.1 L239.4 2449.2 L230.5 2450.1Z M402.2 2523.0 L412.1 2511.7 L424.0 2518.5 L422.5 2522.4 L407.6 2526.0Z M486.5 2573.6 L489.4 2561.7 L502.8 2557.2 L510.3 2537.9 L522.2 2531.9 L544.5 2517.0 L551.9 2524.5 L559.4 2526.0 L568.3 2533.4 L589.1 2533.4 L618.9 2539.4 L632.3 2546.8 L648.7 2555.7 L660.6 2557.2 L668.0 2546.8 L678.4 2549.8 L696.3 2537.9 L705.2 2531.9 L717.1 2546.8 L723.1 2537.9 L738.0 2543.8 L755.8 2552.8 L776.6 2561.7 L788.5 2573.6Z M1109.4 2226.9 L1121.3 2223.9 L1128.7 2237.3 L1134.7 2229.8 L1143.6 2219.4 L1151.0 2237.3 L1155.5 2217.9 L1165.9 2200.1 L1171.9 2216.5 L1177.8 2195.6 L1189.7 2186.7 L1197.2 2204.5 L1204.6 2180.7 L1213.5 2173.3 L1219.5 2183.7 L1225.5 2168.8 L1237.4 2164.4 L1246.3 2161.4 L1261.2 2164.4 L1273.1 2168.8 L1285.0 2174.8 L1288.0 2180.7 L1293.9 2192.6 L1305.8 2197.1 L1314.7 2204.5 L1319.2 2213.5 L1311.8 2222.4 L1299.9 2226.9 L1288.0 2231.3 L1299.9 2234.3 L1314.7 2237.3 L1320.7 2234.3 L1326.6 2246.2 L1338.5 2250.7 L1347.5 2246.2 L1360.9 2247.7 L1368.3 2255.1 L1365.3 2267.0 L1356.4 2279.0 L1347.5 2289.4 L1335.6 2293.8 L1341.5 2302.8 L1335.6 2314.7 L1329.6 2323.6 L1326.6 2338.5 L1317.7 2350.4 L1317.7 2368.2 L1314.7 2386.1 L1326.6 2395.0 L1323.7 2409.9 L1314.7 2415.9 L1320.7 2430.7 L1326.6 2445.6 L1317.7 2460.5 L1308.8 2469.4 L1305.8 2481.3 L1299.9 2490.3 L1308.8 2505.1 L1311.8 2523.0 L1302.8 2534.9 L1288.0 2543.8 L1276.0 2555.7 L1258.2 2564.7 L1249.3 2573.6 L1148.1 2573.6 L1146.6 2549.8 L1142.1 2529.0 L1133.2 2514.1 L1124.3 2496.2 L1121.3 2481.3 L1113.8 2460.5 L1106.4 2442.6 L1100.6 2430.1 L1092.1 2420.5 L1073.6 2414.8 L1059.3 2417.7 L1049.4 2422.0 L1038.0 2414.8 L1045.1 2409.1 L1035.1 2403.5 L1029.4 2393.5 L1046.5 2392.1 L1055.1 2392.1 L1057.9 2383.5 L1052.2 2380.7 L1039.4 2383.5 L1026.6 2376.4 L1018.0 2367.9 L1022.3 2365.0 L1020.9 2356.5 L1029.4 2352.2 L1045.1 2343.7 L1059.3 2338.0 L1066.4 2323.7 L1065.0 2312.3 L1072.1 2305.2 L1060.7 2306.7 L1055.1 2309.5 L1050.8 2303.8 L1053.6 2295.3 L1059.3 2286.7 L1069.3 2278.2 L1075.0 2269.6 L1086.4 2269.6 L1087.8 2261.1 L1083.5 2252.6 L1087.8 2244.0 L1097.8 2236.9 L1110.0 2231.2Z M911.3 2252.6 L917.0 2244.0 L924.1 2242.6 L931.2 2234.8 L939.8 2232.6 L948.3 2218.4 L955.4 2224.1 L964.0 2226.9 L963.2 2218.4 L969.6 2204.2 L979.6 2197.0 L991.0 2198.5 L995.3 2191.4 L1002.4 2187.8 L1012.3 2189.9 L1020.9 2189.2 L1038.0 2189.9 L1047.9 2196.3 L1059.3 2199.2 L1072.1 2202.7 L1075.0 2217.0 L1083.5 2218.4 L1086.4 2225.5 L1080.7 2235.5 L1072.1 2245.4 L1066.4 2249.7 L1059.3 2262.5 L1049.4 2275.3 L1040.8 2288.1 L1035.1 2298.1 L1030.9 2306.7 L1028.0 2318.0 L1018.0 2323.7 L1009.5 2335.1 L1006.7 2345.1 L1009.5 2353.6 L1002.4 2360.7 L1003.8 2369.3 L996.7 2373.6 L991.0 2380.7 L986.7 2389.2 L983.9 2397.8 L991.0 2400.6 L986.7 2410.6 L978.2 2414.8 L972.5 2419.1 L962.5 2410.6 L954.0 2414.8 L944.0 2412.0 L935.5 2413.4 L926.9 2409.1 L924.1 2403.5 L932.6 2397.8 L939.8 2392.1 L934.1 2380.7 L936.9 2375.0 L934.1 2369.3 L938.3 2353.6 L948.3 2342.2 L952.6 2330.9 L944.0 2312.3 L942.6 2299.5 L929.8 2292.4 L919.8 2276.8 L915.6 2262.5Z M899.9 2264.0 L904.2 2266.8 L911.3 2269.6 L915.6 2283.9 L925.5 2295.3 L934.1 2301.0 L935.5 2312.3 L944.0 2330.9 L941.2 2339.4 L932.6 2349.4 L929.8 2362.2 L926.9 2369.3 L917.0 2365.0 L908.4 2356.5 L899.9 2345.1 L905.6 2335.1 L895.6 2330.9 L888.5 2319.5 L884.2 2306.7 L889.9 2293.8 L888.5 2282.5 L895.6 2275.3 L898.5 2269.6Z M863.8 2310.2 L869.8 2307.2 L872.2 2317.6 L865.3 2319.1Z M734.8 2418.6 L742.0 2412.3 L748.2 2402.5 L758.9 2389.1 L769.6 2387.3 L771.4 2383.8 L776.8 2387.3 L774.1 2393.6 L775.0 2404.3 L770.5 2408.8 L764.3 2416.8 L758.9 2411.4 L753.6 2420.4 L748.2 2418.6 L744.6 2425.7 L737.5 2423.0Z M765.2 2436.4 L770.5 2423.9 L775.0 2415.0 L780.4 2410.5 L785.7 2413.2 L792.9 2418.6 L800.0 2432.9 L810.7 2433.8 L814.3 2423.9 L807.1 2413.2 L813.4 2403.4 L817.9 2407.0 L818.8 2418.6 L825.0 2425.7 L827.7 2421.2 L833.0 2425.7 L833.0 2434.6 L830.4 2443.6 L814.3 2447.1 L800.0 2454.3 L792.9 2457.0 L785.7 2454.3 L783.9 2448.9 L794.6 2443.6 L785.7 2445.4 L776.8 2444.5 L770.5 2440.9Z M755.4 2431.1 L760.7 2423.9 L763.4 2424.8 L760.7 2432.9Z M780.4 2401.6 L785.7 2399.8 L788.4 2404.3 L783.0 2405.2Z M838.4 2437.3 L842.9 2436.4 L843.8 2442.7 L839.3 2443.2Z M790.2 2360.5 L802.7 2350.7 L809.8 2351.6 L811.6 2357.9 L807.1 2361.4 L799.1 2359.6 L792.9 2364.1Z M791.1 2374.8 L800.0 2370.4 L808.9 2368.6 L809.8 2375.7 L805.4 2384.6 L797.3 2389.1 L792.0 2382.9Z M780.4 2372.1 L783.9 2370.4 L787.5 2376.6 L783.9 2378.4Z M830.4 2379.3 L833.0 2377.5 L840.2 2392.7 L837.5 2394.5Z M834.1 2337.0 L841.4 2332.5 L853.4 2338.6 L860.7 2350.7 L867.9 2357.9 L869.6 2374.8 L864.3 2376.6 L857.1 2366.8 L848.2 2363.2 L841.1 2361.4 L835.7 2354.3Z M875.0 2350.7 L878.6 2348.0 L889.3 2354.3 L893.8 2359.6 L892.9 2371.2 L885.7 2376.6 L880.4 2372.1 L878.6 2363.2 L875.9 2357.9Z M887.5 2380.2 L892.9 2376.6 L901.8 2377.5 L902.7 2382.9 L896.4 2385.5 L889.3 2384.6Z M916.1 2382.9 L920.5 2382.0 L923.2 2389.1 L917.0 2390.0Z M839.3 2406.1 L842.9 2407.9 L848.2 2415.0 L855.4 2408.8 L864.3 2407.9 L871.4 2411.4 L874.1 2407.0 L878.6 2415.0 L879.5 2432.9 L875.9 2443.6 L869.6 2445.4 L862.5 2437.3 L867.9 2431.1 L858.9 2427.5 L851.8 2432.9 L844.6 2422.1 L841.1 2415.0Z M884.8 2400.7 L889.3 2397.1 L900.0 2399.8 L904.5 2407.9 L901.8 2415.0 L893.8 2414.1 L888.4 2407.9Z M885.7 2441.8 L894.6 2432.0 L901.8 2440.0 L900.9 2450.7 L898.2 2453.4 L891.1 2450.7Z M903.6 2408.8 L919.6 2407.9 L925.0 2400.7 L937.5 2398.9 L944.6 2391.8 L950.0 2395.4 L962.5 2398.9 L978.6 2393.6 L987.5 2397.1 L991.1 2402.5 L985.7 2411.4 L978.6 2415.0 L973.2 2418.6 L967.9 2410.5 L957.1 2411.4 L946.4 2415.0 L935.7 2414.1 L925.0 2411.4 L923.2 2418.6 L930.4 2429.3 L939.3 2434.6 L950.0 2429.3 L958.9 2426.6 L969.6 2427.5 L978.6 2432.9 L982.1 2440.9 L978.6 2451.6 L969.6 2455.2 L957.1 2454.3 L946.4 2455.2 L930.4 2455.2 L921.4 2452.5 L912.5 2445.4 L908.9 2431.1 L907.1 2418.6Z M725.0 2458.8 L743.8 2456.1 L750.9 2463.2 L760.7 2461.4 L776.8 2477.5 L758.9 2497.1 L750.0 2504.3 L748.2 2515.0 L733.0 2521.2 L718.8 2505.2 L723.2 2484.6 L728.6 2468.6Z M757.1 2507.0 L759.8 2497.1 L776.8 2482.9 L782.1 2479.3 L785.7 2486.4 L783.9 2493.6 L791.1 2487.3 L797.3 2490.0 L803.6 2497.1 L807.1 2488.2 L814.3 2493.6 L817.9 2506.1 L823.2 2508.8 L819.6 2482.9 L825.0 2479.3 L832.1 2491.8 L835.7 2506.1 L841.1 2520.4 L850.0 2529.3 L858.9 2538.2 L855.4 2545.4 L848.2 2550.7 L853.6 2554.3 L842.9 2559.6 L828.6 2552.5 L814.3 2561.4 L800.0 2573.9 L785.7 2573.9 L787.5 2561.4 L771.4 2557.9 L766.1 2547.1 L775.0 2538.2 L800.0 2533.8 L783.9 2529.3 L767.9 2532.0 L760.7 2522.1 L778.6 2514.1 L762.5 2515.9Z M698.2 2541.8 L707.1 2532.0 L714.3 2548.0 L723.2 2545.4 L722.3 2538.2 L726.8 2550.7 L753.6 2552.5 L771.4 2559.6 L783.9 2568.6 L778.6 2573.9 L698.2 2573.9Z M851.8 2486.4 L858.9 2481.1 L857.1 2473.9 L864.3 2468.6 L876.8 2464.1 L880.4 2470.4 L882.1 2475.7 L878.6 2484.6 L883.9 2488.2 L884.8 2497.1 L882.1 2507.9 L876.8 2511.4 L871.4 2516.8 L864.3 2504.3 L857.1 2495.4Z M827.7 2473.9 L837.5 2473.9 L838.4 2478.4 L833.0 2486.4 L828.6 2481.1Z M890.2 2468.6 L894.6 2463.2 L901.8 2461.4 L908.0 2465.0 L918.8 2467.7 L911.6 2488.2 L900.9 2488.2 L900.0 2504.3 L894.6 2504.3 L892.0 2491.8Z M885.7 2516.8 L892.9 2508.8 L898.2 2509.6 L903.6 2518.6 L908.0 2532.9 L907.1 2541.8 L912.5 2550.7 L910.7 2573.9 L889.3 2573.9 L891.1 2550.7 L885.7 2540.0 L883.9 2527.5Z M875.0 2545.4 L878.6 2543.6 L889.3 2554.3 L885.7 2568.6 L876.8 2573.9 L869.6 2573.9 L871.4 2557.9Z M922.3 2516.8 L921.4 2495.4 L925.0 2482.9 L933.9 2472.1 L944.6 2470.4 L949.1 2473.0 L942.9 2482.9 L939.3 2493.6 L942.9 2506.1 L950.0 2513.2 L951.8 2520.4 L939.3 2522.1 L928.6 2520.4Z M950.0 2481.1 L957.1 2475.7 L967.9 2472.1 L973.2 2475.7 L975.0 2473.9 L989.3 2473.9 L1000.0 2484.6 L1001.8 2488.2 L992.9 2490.0 L1003.6 2497.1 L1014.3 2509.6 L1026.8 2518.6 L1039.3 2527.5 L1050.0 2538.2 L1060.0 2554.3 L1067.9 2573.9 L948.2 2573.9 L947.3 2545.4 L937.5 2536.4 L928.6 2529.3 L930.4 2524.8 L950.0 2523.9 L953.6 2518.6 L948.2 2509.6 L951.8 2500.7 L944.6 2497.1 L946.4 2488.2Z M1494.2 2320.6 L1503.1 2317.6 L1513.5 2319.1 L1522.5 2320.6 L1525.5 2311.7 L1537.4 2320.6 L1540.3 2332.5 L1552.2 2341.5 L1555.2 2353.4 L1546.3 2356.3 L1540.3 2368.2 L1537.4 2383.1 L1531.4 2398.0 L1528.4 2406.9 L1522.5 2401.0 L1515.0 2386.1 L1513.5 2371.2 L1504.6 2365.3 L1498.7 2356.3 L1494.2 2344.4 L1497.2 2332.5Z M1537.4 2305.7 L1546.3 2295.3 L1555.2 2305.7 L1562.7 2298.3 L1570.1 2302.8 L1573.1 2295.3 L1585.0 2302.8 L1588.0 2317.6 L1579.0 2329.5 L1570.1 2335.5 L1561.2 2326.6 L1549.3 2326.6 L1540.3 2317.6Z M1550.8 2356.3 L1558.2 2354.8 L1561.2 2365.3 L1567.1 2368.2 L1571.6 2378.7 L1568.6 2389.1 L1562.7 2390.6 L1559.7 2383.1 L1553.7 2383.1 L1556.7 2371.2Z M1613.2 2308.7 L1622.2 2302.2 L1625.2 2304.2 L1616.2 2310.2Z M1690.6 2290.9 L1702.5 2284.9 L1707.0 2296.8 L1715.9 2287.9 L1724.9 2281.9 L1726.3 2290.9 L1718.9 2296.8 L1713.0 2305.7 L1705.5 2308.7 L1701.0 2299.8 L1696.6 2295.3Z M1744.2 2273.0 L1754.6 2261.1 L1763.5 2258.1 L1768.0 2267.0 L1766.5 2279.0 L1769.5 2284.9 L1757.6 2287.9 L1748.7 2286.4Z M1772.5 2284.9 L1787.4 2284.9 L1787.4 2293.8 L1778.4 2296.8 L1772.5 2295.3Z M1791.8 2281.9 L1797.8 2273.0 L1803.7 2271.5 L1805.8 2279.0 L1799.3 2286.4 L1793.3 2287.3Z M1730.8 2301.3 L1739.7 2298.3 L1741.2 2305.7 L1733.8 2307.2Z M1751.6 2302.8 L1760.6 2296.8 L1768.0 2299.8 L1760.6 2308.7 L1753.1 2308.7Z M1765.0 2244.7 L1771.0 2243.8 L1768.0 2250.7Z M1785.9 2252.2 L1794.8 2250.7 L1796.3 2255.1 L1787.4 2255.7Z M1717.4 2307.2 L1724.9 2310.2 L1726.3 2314.7 L1718.9 2313.2Z M1882.6 2280.4 L1890.0 2278.1 L1890.9 2283.4 L1884.1 2285.5Z M1866.2 2323.0 L1875.2 2325.1 L1876.0 2328.1 L1867.7 2326.6Z M1768.0 2310.2 L1774.0 2308.1 L1774.6 2314.1 L1768.9 2313.5Z M1775.5 2276.0 L1784.4 2273.0 L1781.4 2280.4Z M1727.8 2508.1 L1733.8 2493.2 L1739.7 2478.4 L1745.7 2463.5 L1751.6 2448.6 L1757.6 2436.7 L1769.5 2424.8 L1784.4 2414.4 L1799.3 2406.9 L1811.2 2401.0 L1823.1 2399.5 L1826.0 2406.9 L1820.1 2415.9 L1805.2 2424.8 L1790.3 2433.7 L1775.5 2445.6 L1766.5 2457.5 L1757.6 2475.4 L1750.2 2490.3 L1748.7 2505.1 L1754.6 2520.0 L1760.6 2529.0 L1748.7 2531.9 L1736.8 2523.0 L1729.3 2517.0Z M1507.6 2573.6 L1522.5 2558.7 L1537.4 2543.8 L1552.2 2534.9 L1567.1 2526.0 L1579.0 2521.5 L1593.9 2524.5 L1605.8 2530.4 L1608.8 2537.9 L1617.7 2543.8 L1629.6 2551.3 L1644.5 2558.7 L1656.4 2567.6 L1662.4 2573.6Z M1680.2 2573.6 L1686.2 2563.2 L1701.0 2567.6 L1715.9 2570.6 L1730.8 2564.7 L1736.8 2558.7 L1748.7 2561.7 L1769.5 2557.2 L1772.5 2546.8 L1766.5 2534.9 L1771.0 2531.9 L1778.4 2540.9 L1784.4 2542.3 L1796.3 2548.3 L1808.2 2552.8 L1820.1 2561.7 L1826.0 2573.6Z M1820.2 2573.3 L1822.4 2568.8 L1828.4 2559.9 L1818.7 2551.0 L1814.2 2543.5 L1816.5 2537.6 L1812.7 2527.1 L1814.2 2516.7 L1824.6 2503.3 L1829.1 2485.5 L1832.1 2482.5 L1833.6 2476.5 L1838.8 2475.8 L1842.5 2485.5 L1847.0 2489.9 L1847.7 2500.4 L1845.5 2509.3 L1841.8 2513.8 L1846.2 2522.7 L1845.5 2553.9 L1847.7 2562.9 L1849.9 2573.3Z M1708.5 2551.3 L1714.4 2548.3 L1718.9 2554.2 L1713.0 2560.2Z M1962.4 2281.9 L1977.2 2266.5 L1990.6 2286.4 L1986.2 2290.9 L1987.7 2304.2 L1971.3 2310.2 L1966.8 2313.2 L1960.9 2305.7 L1956.4 2298.3 L1960.9 2292.3Z M1966.8 2314.7 L1987.7 2307.2 L1990.6 2314.7 L1996.6 2310.2 L2002.5 2316.2 L2001.0 2341.5 L1995.1 2348.9 L1983.2 2344.4 L1974.3 2338.5 L1969.8 2326.6 L1963.8 2323.6Z M1951.0 2311.1 L1960.9 2310.2 L1966.8 2317.0 L1960.0 2320.6 L1952.8 2316.2Z M2010.0 2338.5 L2014.4 2332.5 L2023.4 2337.0 L2030.8 2347.4 L2033.8 2356.3 L2027.8 2362.3 L2013.0 2368.2 L2001.0 2372.7 L2002.5 2362.3 L2007.0 2350.4Z M1945.4 2270.0 L1954.3 2269.4 L1953.4 2275.4 L1946.9 2274.5Z M1858.1 2573.3 L1858.9 2561.4 L1854.4 2553.9 L1852.9 2548.0 L1855.9 2539.0 L1854.4 2527.1 L1849.9 2513.8 L1857.4 2504.8 L1861.1 2491.4 L1861.1 2503.3 L1862.6 2518.2 L1869.3 2519.7 L1875.2 2518.2 L1881.2 2526.4 L1884.2 2521.9 L1878.2 2515.2 L1870.8 2512.3 L1867.8 2507.8 L1872.3 2503.3 L1877.5 2507.1 L1874.5 2501.1 L1879.0 2494.4 L1884.2 2497.4 L1888.6 2497.4 L1896.1 2504.8 L1905.0 2512.3 L1902.0 2521.2 L1900.5 2531.6 L1906.5 2539.0 L1910.2 2531.6 L1909.5 2510.8 L1902.0 2503.3 L1894.6 2495.9 L1890.1 2489.9 L1892.4 2475.4 L1920.7 2469.4 L1929.6 2463.5 L1919.2 2454.5 L1929.6 2444.1 L1944.5 2433.7 L1959.4 2424.8 L1971.3 2420.3 L1986.2 2417.3 L1998.1 2412.9 L2001.0 2424.8 L1999.6 2411.4 L2008.5 2409.9 L2010.0 2395.0 L2018.9 2384.6 L2026.3 2379.5 L2035.3 2386.1 L2027.8 2395.0 L2042.7 2395.0 L2042.7 2409.9 L2057.6 2404.0 L2069.5 2405.4 L2076.9 2412.9 L2080.8 2426.3 L2078.4 2441.2 L2069.5 2454.5 L2057.6 2466.5 L2042.7 2478.4 L2036.8 2488.8 L2048.7 2481.3 L2060.6 2469.4 L2075.5 2466.5 L2079.9 2475.4 L2078.4 2493.2 L2084.4 2491.8 L2084.4 2475.4 L2105.2 2473.9 L2111.2 2484.3 L2129.0 2487.3 L2136.5 2473.9 L2143.9 2470.9 L2155.8 2478.4 L2167.7 2487.3 L2170.7 2505.1 L2169.2 2514.1 L2179.6 2527.5 L2188.5 2508.1 L2200.5 2515.6 L2218.3 2517.0 L2227.2 2509.6 L2228.7 2497.7 L2236.2 2490.3 L2254.0 2493.2 L2265.9 2497.7 L2280.8 2503.7 L2289.7 2514.1 L2298.7 2524.5 L2316.5 2523.0 L2334.4 2524.5 L2343.3 2531.9 L2344.8 2545.3 L2355.2 2546.8 L2364.1 2543.8 L2388.0 2546.8 L2393.9 2543.8 L2399.9 2558.7 L2405.8 2558.7 L2404.3 2539.4 L2417.7 2542.3 L2438.5 2543.8 L2453.4 2552.8 L2465.3 2561.7 L2477.2 2573.6Z M2212.4 2441.2 L2218.3 2421.8 L2225.8 2417.3 L2236.2 2430.7 L2237.7 2418.8 L2248.1 2423.3 L2260.0 2432.2 L2254.0 2441.2 L2246.6 2447.1 L2239.1 2445.6 L2224.3 2450.1 L2216.8 2445.6Z M2265.9 2433.7 L2274.9 2436.7 L2285.3 2438.2 L2291.2 2442.6 L2283.8 2449.2 L2274.9 2447.1 L2267.4 2439.7Z M2230.2 2478.4 L2239.1 2467.9 L2246.6 2472.4 L2250.5 2479.0 L2239.1 2481.9Z M2204.9 2427.8 L2207.9 2433.7 L2202.8 2434.3Z M2277.8 2404.5 L2284.4 2403.4 L2283.8 2407.5Z M2450.5 2524.5 L2457.9 2515.6 L2469.8 2514.7 L2471.3 2521.5 L2462.4 2525.4 L2451.9 2526.0Z M2069.5 2460.5 L2075.5 2456.0 L2079.0 2459.0 L2074.0 2464.1Z M2536.0 2575.8 L2546.0 2556.0 L2560.8 2538.6 L2575.7 2526.2 L2590.6 2518.8 L2610.4 2526.2 L2640.2 2528.7 L2640.2 2575.8Z M2449.2 2521.2 L2459.2 2513.8 L2471.6 2516.3 L2469.1 2523.7 L2454.2 2525.2Z" fill="#f2efe9" fill-rule="nonzero"/><path d="M944.0 2297.4 L969.6 2295.3 L991.0 2286.7" fill="none" stroke="#a6c8d6" stroke-width="5" stroke-linejoin="round" stroke-linecap="round"/><path d="M958.3 2301.0 L969.6 2320.9 L978.2 2322.3" fill="none" stroke="#a6c8d6" stroke-width="4" stroke-linejoin="round" stroke-linecap="round"/><path d="M939.8 2295.3 L942.6 2279.6 L964.0 2270.4" fill="none" stroke="#a6c8d6" stroke-width="4" stroke-linejoin="round" stroke-linecap="round"/><path d="M926.9 2276.0 L949.7 2268.2" fill="none" stroke="#a6c8d6" stroke-width="3" stroke-linejoin="round" stroke-linecap="round"/><path d="M983.9 2289.6 L985.3 2272.5 L996.7 2261.1" fill="none" stroke="#a6c8d6" stroke-width="3" stroke-linejoin="round" stroke-linecap="round"/><path d="M1066.4 2255.4 L1049.4 2261.1 L1036.5 2272.5" fill="none" stroke="#a6c8d6" stroke-width="3" stroke-linejoin="round" stroke-linecap="round"/><path d="M949.7 2353.6 L955.4 2369.3 L961.1 2380.7" fill="none" stroke="#a6c8d6" stroke-width="4" stroke-linejoin="round" stroke-linecap="round"/><path d="M966.8 2346.5 L955.4 2342.2" fill="none" stroke="#a6c8d6" stroke-width="3" stroke-linejoin="round" stroke-linecap="round"/><path d="M1046.5 2209.9 L1057.9 2199.9" fill="none" stroke="#a6c8d6" stroke-width="3" stroke-linejoin="round" stroke-linecap="round"/><path d="M998.1 2198.5 L1003.8 2212.7 L999.5 2219.8" fill="none" stroke="#a6c8d6" stroke-width="3" stroke-linejoin="round" stroke-linecap="round"/><path d="M1013.8 2195.6 L1019.5 2207.0" fill="none" stroke="#a6c8d6" stroke-width="3" stroke-linejoin="round" stroke-linecap="round"/><path d="M964.0 2229.8 L983.9 2245.4" fill="none" stroke="#a6c8d6" stroke-width="3" stroke-linejoin="round" stroke-linecap="round"/><path d="M409.7 2556 V2575 M632.3 2547 V2575" stroke="#b5aebc" stroke-width="1.6" fill="none"/><ellipse cx="2012" cy="2453" rx="11" ry="3.5" fill="#aad3df" opacity=".6" transform="rotate(-25 2012 2453)"/><ellipse cx="2020" cy="2462" rx="5" ry="3" fill="#aad3df" opacity=".6" transform="rotate(0 2020 2462)"/><ellipse cx="2035" cy="2456" rx="4" ry="2.5" fill="#aad3df" opacity=".6" transform="rotate(0 2035 2456)"/><ellipse cx="2000" cy="2478" rx="3" ry="2" fill="#aad3df" opacity=".6" transform="rotate(0 2000 2478)"/><path d="M1895.4 2499.2 L1904.3 2512.6 L1905.8 2531.9" fill="none" stroke="#a6c8d6" stroke-width="5" stroke-linejoin="round" stroke-linecap="round"/><path d="M1855.1 2554.7 L1863.3 2553.9 L1870.8 2556.2 L1875.2 2571.9" fill="none" stroke="#a6c8d6" stroke-width="4" stroke-linejoin="round" stroke-linecap="round"/></g></g>
<g filter="drop-shadow(0 3px 4px rgba(0,0,0,.18))"><rect x="252" y="2168" width="60" height="119.5" rx="8" fill="#fff"/><rect x="252" y="2308" width="60" height="60" rx="8" fill="#fff"/></g><path d="M252 2227 H312" stroke="#d8dce3" stroke-width="1.5"/><circle cx="282" cy="2197" r="15" fill="#2a3545"/><path d="M273 2197 H291 M282 2188 V2206" stroke="#fff" stroke-width="2"/><circle cx="282" cy="2257.5" r="15" fill="#2a3545"/><path d="M273 2257.5 H291" stroke="#fff" stroke-width="2"/><path d="M275 2328 V2344.5 H293 M271 2333.5 H288.5 V2350" fill="none" stroke="#2a3545" stroke-width="3.4"/><path d="M276 2343.5 L292.5 2328" stroke="#2a3545" stroke-width="1"/>
<rect x="29.5" y="2599.5" width="29" height="29" rx="5" fill="none" stroke="#fff" stroke-width="3.4"/><path d="M36 2607.5 L43 2614 L36 2620.5" fill="none" stroke="#fff" stroke-width="3.2"/><path d="M45 2621 H52" stroke="#fff" stroke-width="3.2"/>
</svg>
<div id="tx">
<span class="t" style="left:33.0px;top:18.4px;font-size:35px;color:#fff;letter-spacing:-1.62px;-webkit-text-stroke:0.4px #fff;">aws</span>
<span class="t" style="left:212.5px;top:36.7px;font-size:24px;color:#fff;letter-spacing:-0.50px;-webkit-text-stroke:0.4px #fff;">Services</span>
<span class="t" style="left:407.0px;top:35.5px;font-size:27.5px;color:#aab7b8;font-style:italic;letter-spacing:-1.03px;-webkit-text-stroke:0.6px #aab7b8;">Search</span>
<span class="t" style="left:1256.0px;top:36.6px;font-size:27px;color:#aab7b8;letter-spacing:1.18px;-webkit-text-stroke:0.5px #aab7b8;">[Option+S]</span>
<span class="t" style="left:91.0px;top:106.7px;font-size:24px;color:#fff;letter-spacing:0.06px;-webkit-text-stroke:0.4px #fff;">CloudWatch</span>
<span class="t" style="left:1921.0px;top:36.4px;font-size:24px;color:#fff;letter-spacing:-0.01px;-webkit-text-stroke:0.4px #fff;">IsenLink</span>
<span class="t" style="left:2091.7px;top:34.2px;font-size:24px;color:#fff;font-weight:700;-webkit-text-stroke:0.8px #fff;">?</span>
<span class="t" style="left:2283.0px;top:34.7px;font-size:24px;color:#fff;letter-spacing:0.17px;-webkit-text-stroke:0.8px #fff;">N. Virginia</span>
<span class="t" style="left:2870.7px;top:422.2px;font-size:24px;color:#545b64;font-weight:700;-webkit-text-stroke:0.9px #545b64;">?</span>
<span class="t" style="left:197.0px;top:225.4px;font-size:35px;color:#16191f;font-weight:700;letter-spacing:-0.21px;-webkit-text-stroke:0.4px #16191f;">OpenSearch dashboards</span>
<span class="t" style="left:624.0px;top:235.5px;font-size:23px;color:#0073bb;font-weight:700;letter-spacing:0.71px;-webkit-text-stroke:0.3px #0073bb;">Info</span>
<span class="t" style="left:2165.0px;top:230.8px;font-size:28px;color:#545b64;font-weight:700;letter-spacing:-0.53px;-webkit-text-stroke:0.5px #545b64;">Actions</span>
<span class="t" style="left:2407.0px;top:230.8px;font-size:28px;color:#16191f;font-weight:700;letter-spacing:-0.03px;-webkit-text-stroke:0.5px #16191f;">Create dashboard</span>
<span class="t" style="left:197.0px;top:317.1px;font-size:27px;color:#16191f;letter-spacing:0.37px;-webkit-text-stroke:0.4px #16191f;">Select a dashboard</span>
<span class="t" style="left:215.3px;top:379.1px;font-size:27px;color:#16191f;letter-spacing:0.96px;-webkit-text-stroke:0.4px #16191f;">11182052_WAF</span>
<span class="t" style="left:1632.0px;top:379.1px;font-size:27px;color:#16191f;letter-spacing:1.29px;-webkit-text-stroke:0.4px #16191f;">2024-11-18T20:40:00</span>
<span class="t" style="left:2015.0px;top:379.1px;font-size:27px;color:#16191f;letter-spacing:1.24px;-webkit-text-stroke:0.4px #16191f;">2024-11-18T20:45:00</span>
<span class="t" style="left:2430.0px;top:379.1px;font-size:27px;color:#16191f;letter-spacing:0.72px;-webkit-text-stroke:0.4px #16191f;">Local timezone</span>
<span class="t" style="left:196.0px;top:491.7px;font-size:27px;color:#545b64;font-weight:700;letter-spacing:0.20px;-webkit-text-stroke:0.3px #545b64;">Synchronization:</span>
<span class="t" style="left:434.6px;top:491.7px;font-size:27px;color:#16191f;letter-spacing:0.72px;-webkit-text-stroke:0.4px #16191f;">Every 15 minutes</span>
<span class="t" style="left:670.0px;top:491.7px;font-size:27px;color:#16191f;letter-spacing:0.05px;-webkit-text-stroke:0.4px #16191f;">(Last sync:</span>
<span class="t" style="left:816.5px;top:491.7px;font-size:27px;color:#16191f;letter-spacing:0.49px;-webkit-text-stroke:0.4px #16191f;">2 hours ago)</span>
<span class="t" style="left:990.5px;top:491.7px;font-size:27px;color:#545b64;font-weight:700;letter-spacing:0.64px;-webkit-text-stroke:0.3px #545b64;">Synchronize now</span>
<span class="t" style="left:1298.7px;top:491.7px;font-size:27px;color:#545b64;font-weight:700;letter-spacing:-0.42px;-webkit-text-stroke:0.3px #545b64;">Log groups:</span>
<span class="t" style="left:1474.5px;top:493.1px;font-size:27px;color:#0073bb;-webkit-text-stroke:0.4px #0073bb;">1</span>
<span class="t" style="left:232.6px;top:581.4px;font-size:28.5px;color:#1a1f2b;font-weight:700;letter-spacing:-0.24px;">Total Requests</span>
<span class="t" style="left:744.5px;top:581.4px;font-size:28.5px;color:#1a1f2b;font-weight:700;letter-spacing:-0.19px;">Requests History</span>
<span class="t" style="left:233.0px;top:1309.9px;font-size:28.5px;color:#1a1f2b;font-weight:700;letter-spacing:-0.70px;">Requests to Web ACL Name</span>
<span class="t" style="left:999.0px;top:1309.9px;font-size:28.5px;color:#1a1f2b;font-weight:700;letter-spacing:-0.42px;">Blocked Requests by Terminating Rule</span>
<span class="t" style="left:1816.4px;top:1309.9px;font-size:28.5px;color:#1a1f2b;font-weight:700;letter-spacing:-0.48px;">Sources</span>
<span class="t" style="left:232.7px;top:2093.4px;font-size:28.5px;color:#1a1f2b;font-weight:700;letter-spacing:-0.51px;">Country or Region by Requests</span>
<span class="t" style="left:365.0px;top:873.6px;font-size:30px;color:#2a3545;letter-spacing:-1.16px;">BLOCK - Count</span>
<span class="t" style="left:363.5px;top:1187.6px;font-size:30px;color:#2a3545;letter-spacing:-1.23px;">ALLOW - Count</span>
<span class="t" style="left:807.0px;top:1155.5px;font-size:21.5px;color:#5e6470;-webkit-text-stroke:0.25px #5e6470;">0</span>
<span class="t" style="left:795.1px;top:996.1px;font-size:21.5px;color:#5e6470;-webkit-text-stroke:0.25px #5e6470;">50</span>
<span class="t" style="left:783.1px;top:836.7px;font-size:21.5px;color:#5e6470;-webkit-text-stroke:0.25px #5e6470;">100</span>
<span class="t" style="left:783.1px;top:677.3px;font-size:21.5px;color:#5e6470;-webkit-text-stroke:0.25px #5e6470;">150</span>
<span class="t" style="left:940.5px;top:1181.8px;font-size:21.5px;color:#5e6470;letter-spacing:0.76px;-webkit-text-stroke:0.25px #5e6470;">20:40:30</span>
<span class="t" style="left:1087.3px;top:1181.8px;font-size:21.5px;color:#5e6470;letter-spacing:0.76px;-webkit-text-stroke:0.25px #5e6470;">20:41:00</span>
<span class="t" style="left:1234.1px;top:1181.8px;font-size:21.5px;color:#5e6470;letter-spacing:0.76px;-webkit-text-stroke:0.25px #5e6470;">20:41:30</span>
<span class="t" style="left:1380.9px;top:1181.8px;font-size:21.5px;color:#5e6470;letter-spacing:0.76px;-webkit-text-stroke:0.25px #5e6470;">20:42:00</span>
<span class="t" style="left:1527.7px;top:1181.8px;font-size:21.5px;color:#5e6470;letter-spacing:0.76px;-webkit-text-stroke:0.25px #5e6470;">20:42:30</span>
<span class="t" style="left:1674.5px;top:1181.8px;font-size:21.5px;color:#5e6470;letter-spacing:0.76px;-webkit-text-stroke:0.25px #5e6470;">20:43:00</span>
<span class="t" style="left:1821.3px;top:1181.8px;font-size:21.5px;color:#5e6470;letter-spacing:0.76px;-webkit-text-stroke:0.25px #5e6470;">20:43:30</span>
<span class="t" style="left:1968.1px;top:1181.8px;font-size:21.5px;color:#5e6470;letter-spacing:0.76px;-webkit-text-stroke:0.25px #5e6470;">20:44:00</span>
<span class="t" style="left:2114.9px;top:1181.8px;font-size:21.5px;color:#5e6470;letter-spacing:0.76px;-webkit-text-stroke:0.25px #5e6470;">20:44:30</span>
<span class="t" style="left:1524.0px;top:1214.5px;font-size:23px;color:#4a505c;font-weight:700;letter-spacing:0.88px;">Start Time</span>
<span class="t" style="left:728.8px;top:891.0px;font-size:23px;color:#4a505c;font-weight:700;transform-origin:33.2px 19.5px;transform:rotate(-90deg);">Count</span>
<span class="t" style="left:2384.0px;top:649.0px;font-size:23px;color:#1f2733;letter-spacing:-0.50px;">BLOCK</span>
<span class="t" style="left:2384.0px;top:696.5px;font-size:23px;color:#1f2733;letter-spacing:-0.63px;">ALLOW</span>
<span class="t" style="left:696.3px;top:1375.5px;font-size:25px;color:#1f2733;letter-spacing:-0.34px;">arn:aws:wafv2:us-w…</span>
<span class="t" style="left:696.3px;top:1423.5px;font-size:25px;color:#1f2733;letter-spacing:-0.34px;">arn:aws:wafv2:us-w…</span>
<span class="t" style="left:696.3px;top:1471.5px;font-size:25px;color:#1f2733;letter-spacing:-0.34px;">arn:aws:wafv2:us-w…</span>
<span class="t" style="left:696.3px;top:1519.5px;font-size:25px;color:#1f2733;letter-spacing:-0.34px;">arn:aws:wafv2:us-w…</span>
<span class="t" style="left:696.3px;top:1567.5px;font-size:25px;color:#1f2733;letter-spacing:-0.34px;">arn:aws:wafv2:us-w…</span>
<span class="t" style="left:696.3px;top:1615.5px;font-size:25px;color:#1f2733;letter-spacing:-0.34px;">arn:aws:wafv2:us-w…</span>
<span class="t" style="left:696.3px;top:1663.5px;font-size:25px;color:#1f2733;letter-spacing:-0.34px;">arn:aws:wafv2:us-w…</span>
<span class="t" style="left:696.3px;top:1711.5px;font-size:25px;color:#1f2733;letter-spacing:-0.34px;">arn:aws:wafv2:us-w…</span>
<span class="t" style="left:696.3px;top:1759.5px;font-size:25px;color:#1f2733;letter-spacing:-0.34px;">arn:aws:wafv2:us-w…</span>
<span class="t" style="left:696.3px;top:1807.5px;font-size:25px;color:#1f2733;letter-spacing:-0.34px;">arn:aws:wafv2:us-w…</span>
<span class="t" style="left:1514.5px;top:1375.5px;font-size:25px;color:#1f2733;letter-spacing:-0.05px;">RULE_ID_9</span>
<span class="t" style="left:1514.5px;top:1423.5px;font-size:25px;color:#1f2733;letter-spacing:-0.05px;">RULE_ID_5</span>
<span class="t" style="left:1514.5px;top:1471.5px;font-size:25px;color:#1f2733;letter-spacing:-0.18px;">RULE_ID_7</span>
<span class="t" style="left:1514.5px;top:1519.5px;font-size:25px;color:#1f2733;letter-spacing:-0.05px;">RULE_ID_4</span>
<span class="t" style="left:1514.5px;top:1567.5px;font-size:25px;color:#1f2733;letter-spacing:-0.43px;">RULE_ID_1</span>
<span class="t" style="left:1514.5px;top:1615.5px;font-size:25px;color:#1f2733;letter-spacing:-0.13px;">Other</span>
<span class="t" style="left:1855.7px;top:1423.7px;font-size:21.5px;color:#5e6470;letter-spacing:0.58px;">103450775620:yhltew7mtf:dev</span>
<span class="t" style="left:2283.6px;top:1423.7px;font-size:21.5px;color:#54b399;">1</span>
<span class="t" style="left:1855.7px;top:1536.8px;font-size:21.5px;color:#5e6470;letter-spacing:0.58px;">105185900109:yhltew7mtf:dev</span>
<span class="t" style="left:2283.6px;top:1536.8px;font-size:21.5px;color:#54b399;">1</span>
<span class="t" style="left:1855.7px;top:1649.8px;font-size:21.5px;color:#5e6470;letter-spacing:0.58px;">105508768879:yhltew7mtf:dev</span>
<span class="t" style="left:2283.6px;top:1649.8px;font-size:21.5px;color:#54b399;">1</span>
<span class="t" style="left:1855.7px;top:1762.9px;font-size:21.5px;color:#5e6470;letter-spacing:0.64px;">109911000088:yhltew7mtf:dev</span>
<span class="t" style="left:2283.6px;top:1762.9px;font-size:21.5px;color:#54b399;">1</span>
<span class="t" style="left:1855.7px;top:1875.9px;font-size:21.5px;color:#5e6470;letter-spacing:0.64px;">114573046820:yhltew7mtf:dev</span>
<span class="t" style="left:2283.6px;top:1875.9px;font-size:21.5px;color:#54b399;">1</span>
<span class="t" style="left:1636.0px;top:1641.5px;font-size:23px;color:#4a505c;font-weight:700;letter-spacing:0.62px;transform-origin:200.0px 19.5px;transform:rotate(-90deg);">aws.waf.httpSourceId: Descending</span>
<span class="t" style="left:2203.1px;top:1938.8px;font-size:21.5px;color:#5e6470;transform-origin:29.9px 18.2px;transform:rotate(-75deg);">0.5</span>
<span class="t" style="left:2268.0px;top:1938.8px;font-size:21.5px;color:#5e6470;transform-origin:12.0px 18.2px;transform:rotate(-75deg);">1</span>
<span class="t" style="left:2222.0px;top:1997.7px;font-size:24px;color:#4a505c;font-weight:700;letter-spacing:0.17px;">Count</span>
<span class="t" style="left:2384.0px;top:1375.5px;font-size:25px;color:#1f2733;letter-spacing:0.07px;">Count</span>
<span class="t" style="left:1018.0px;top:2434.8px;font-size:18px;color:#7d9bcb;font-style:italic;">Baffin</span>
<span class="t" style="left:1025.5px;top:2458.8px;font-size:18px;color:#7d9bcb;font-style:italic;">Bay</span>
<span class="t" style="left:70.7px;top:2601.7px;font-size:24px;color:#fff;letter-spacing:-0.03px;-webkit-text-stroke:0.4px #fff;">CloudShell</span>
<span class="t" style="left:238.0px;top:2601.7px;font-size:24px;color:#fff;letter-spacing:-0.52px;-webkit-text-stroke:0.4px #fff;">Feedback</span>
<span class="t" style="left:1810.8px;top:2602.7px;font-size:24px;color:#fff;letter-spacing:0.08px;-webkit-text-stroke:0.4px #fff;">© 2024, Amazon Web Services, Inc. or its affiliates.</span>
<span class="t" style="left:2423.4px;top:2602.7px;font-size:24px;color:#fff;letter-spacing:-0.11px;-webkit-text-stroke:0.4px #fff;">Privacy</span>
<span class="t" style="left:2559.8px;top:2602.7px;font-size:24px;color:#fff;letter-spacing:0.04px;-webkit-text-stroke:0.4px #fff;">Terms</span>
<span class="t" style="left:2679.9px;top:2602.7px;font-size:24px;color:#fff;letter-spacing:-0.14px;-webkit-text-stroke:0.4px #fff;">Cookie preferences</span>
</div>
</body></html>
